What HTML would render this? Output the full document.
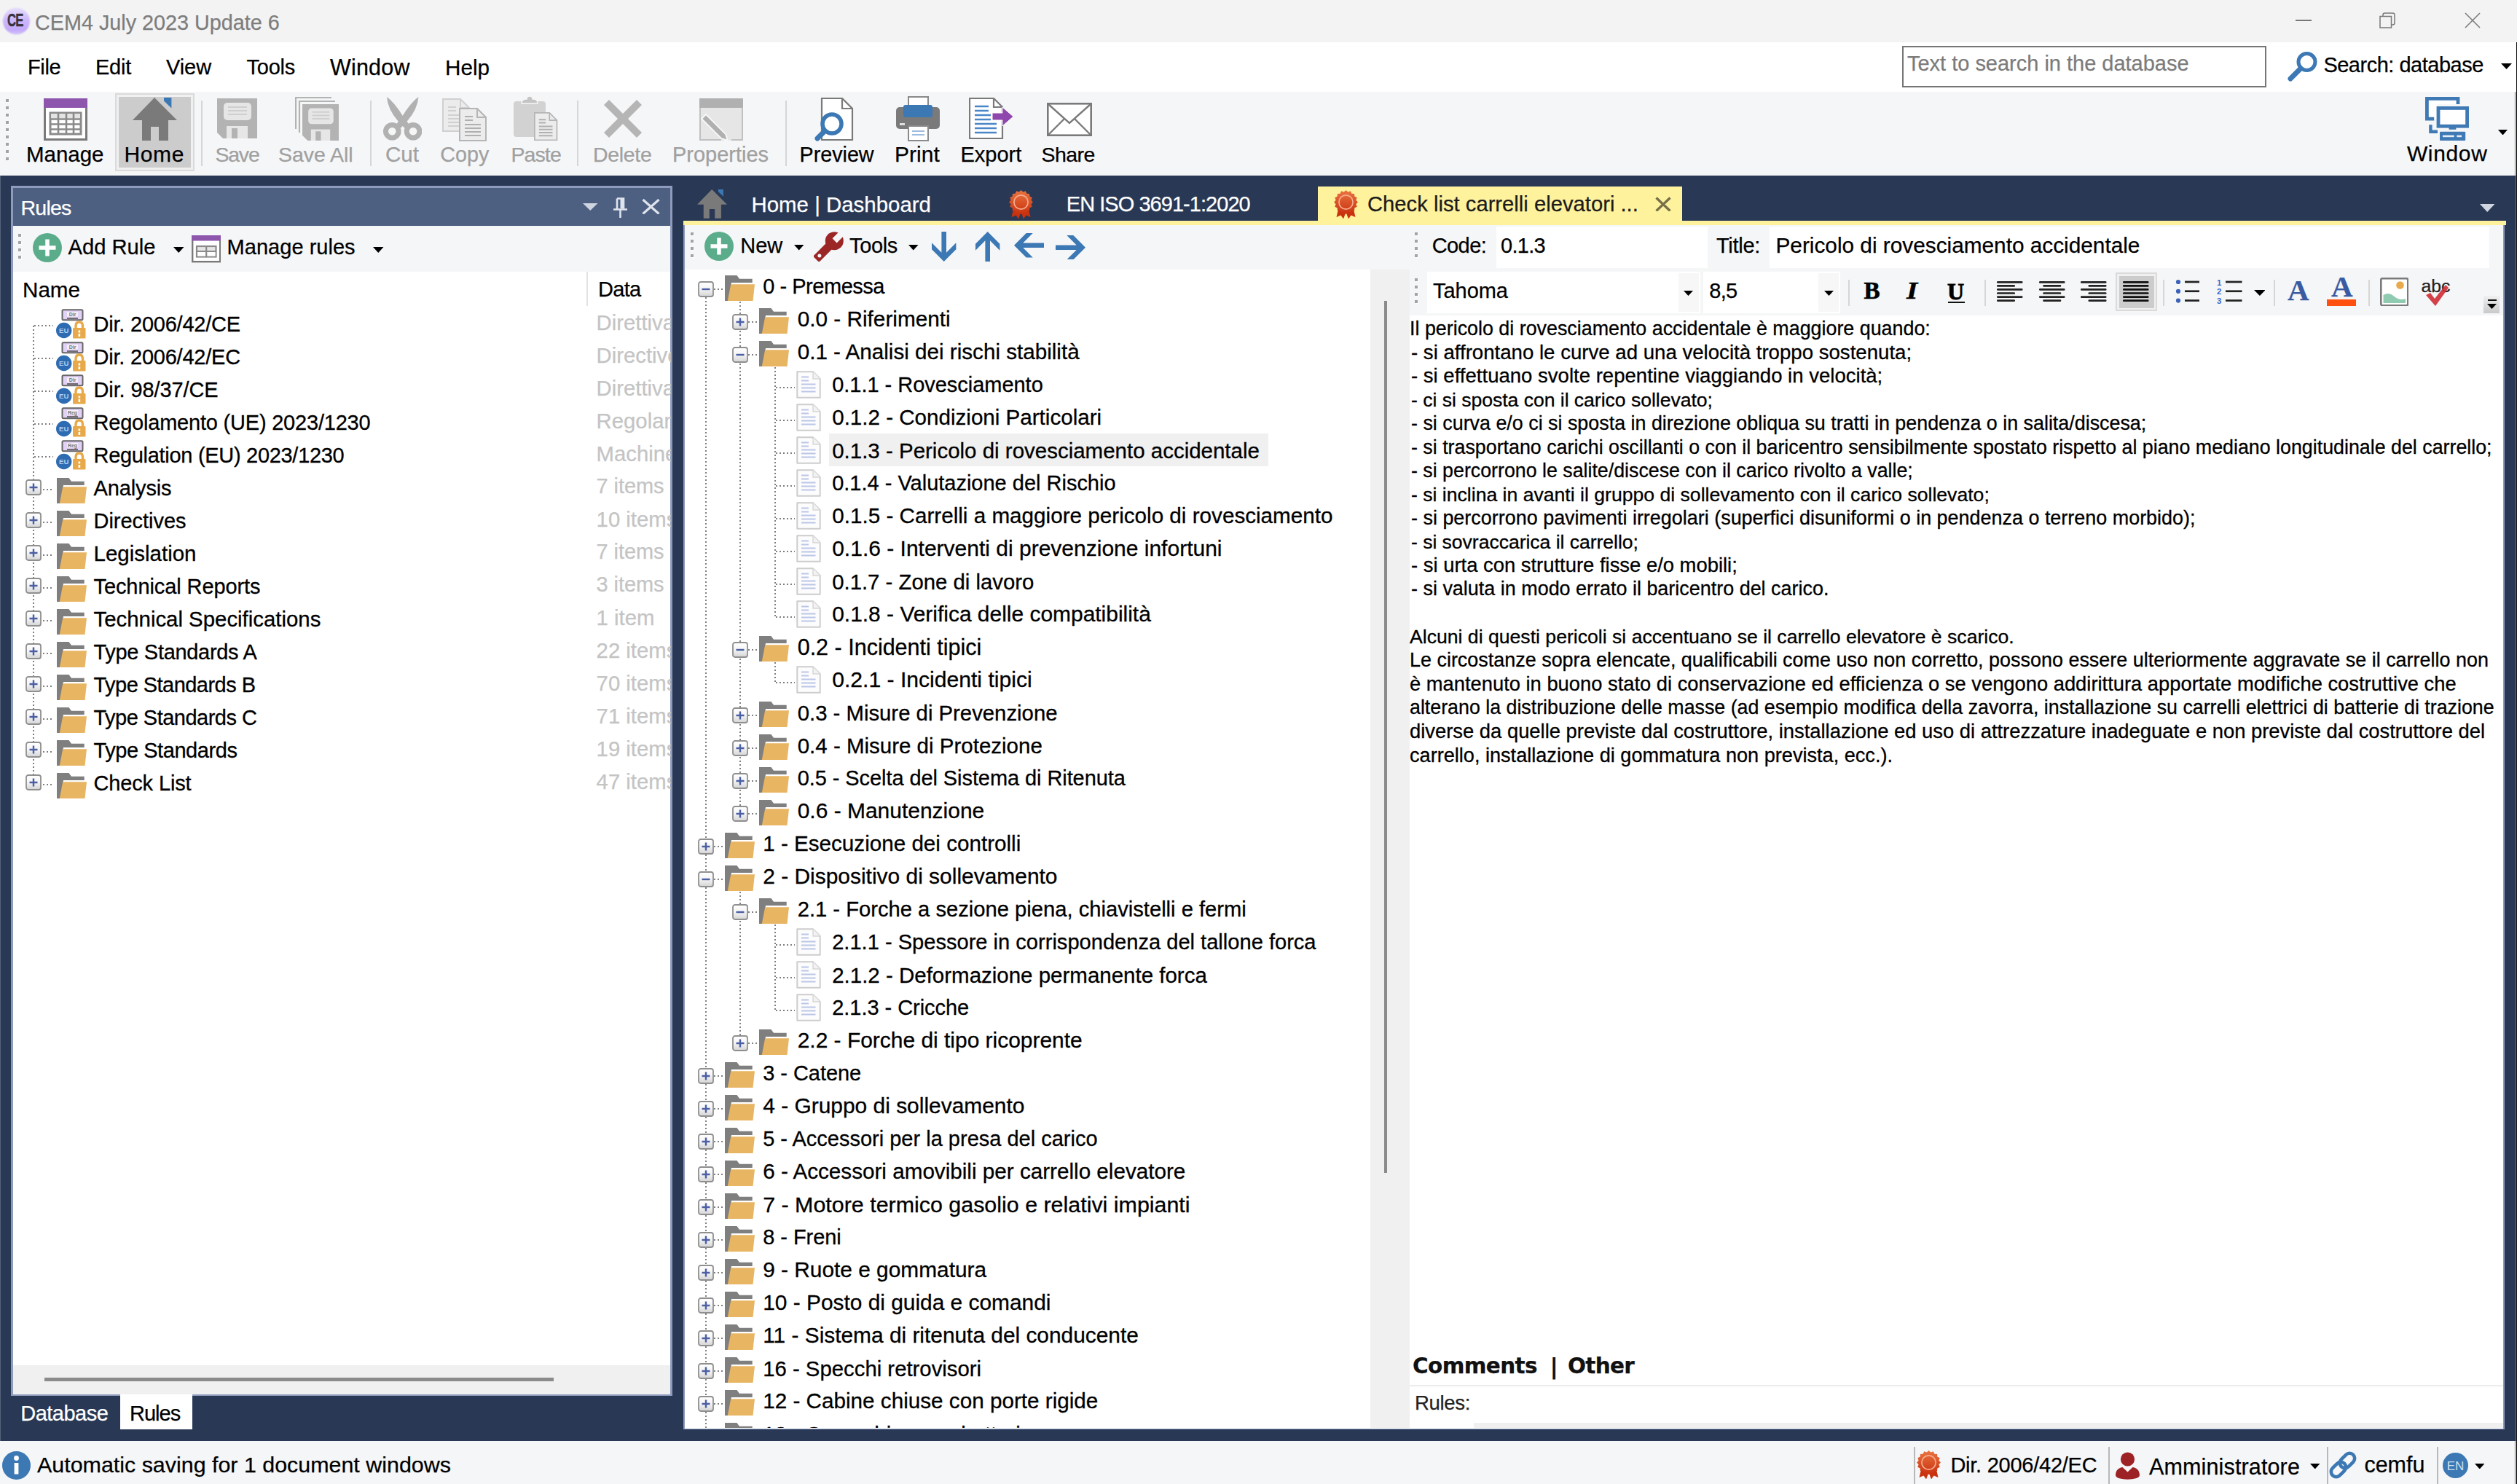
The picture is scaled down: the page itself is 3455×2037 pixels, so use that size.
<!DOCTYPE html><html><head><meta charset='utf-8'><title>CEM4</title><style>html,body{margin:0;padding:0}body{width:3455px;height:2037px;overflow:hidden;position:relative;background:#f5f6f7;font-family:'Liberation Sans',sans-serif}
div,span,svg{position:absolute}
.t{white-space:nowrap;-webkit-text-stroke:0.25px currentColor}
.vd{width:2px;background:repeating-linear-gradient(to bottom,#808080 0 2px,transparent 2px 5px)}
.hd{height:2px;background:repeating-linear-gradient(to right,#808080 0 2px,transparent 2px 5px)}
</style></head><body>
<div style="left:0px;top:0px;width:3455px;height:58px;background:#f3f3f3;"></div>
<div style="left:2.5px;top:9px;width:39.5px;height:39.5px;border-radius:50%;background:radial-gradient(circle at 50% 50%,rgba(243,243,243,0) 60%,#f3f3f3 72%),linear-gradient(#e9e2fc,#cdb8fb 45%,#c3a9fa 80%,#d9cbf8)"></div>
<span id="t1" class="t" style="left:10px;top:16.46px;font-size:24.50px;line-height:24.50px;color:#37323d;font-weight:700;-webkit-text-stroke:0.5px #37323d;transform:scaleX(0.68);transform-origin:0 0;letter-spacing:-1px;">CE</span>
<span id="t2" class="t" style="left:48px;top:16.83px;font-size:28.78px;line-height:28.78px;color:#7d7d7d;letter-spacing:0.000px">CEM4 July 2023 Update 6</span>
<div style="left:3151px;top:27px;width:22px;height:1.6px;background:#777;"></div>
<svg style="left:3266px;top:17px" width="22" height="22" viewBox="0 0 22 22"><path d="M1 5.5H16.5V21H1Z M5 5V3.5Q5 1 7.5 1H18.5Q21 1 21 3.5V14.5Q21 17 18.5 17H17" fill="none" stroke="#7a7a7a" stroke-width="1.5"/></svg>
<svg style="left:3383px;top:17px" width="22" height="22" viewBox="0 0 22 22"><path d="M1 1L21 21M21 1L1 21" stroke="#808080" stroke-width="1.7"/></svg>
<div style="left:0px;top:58px;width:3455px;height:68px;background:#fff;"></div>
<span id="t3" class="t" style="left:38px;top:78.47px;font-size:28.97px;line-height:28.97px;color:#000;letter-spacing:-0.325px">File</span>
<span id="t4" class="t" style="left:131px;top:78.47px;font-size:28.97px;line-height:28.97px;color:#000;letter-spacing:-0.234px">Edit</span>
<span id="t5" class="t" style="left:228px;top:78.47px;font-size:28.97px;line-height:28.97px;color:#000;letter-spacing:-0.071px">View</span>
<span id="t6" class="t" style="left:338.5px;top:78.47px;font-size:28.97px;line-height:28.97px;color:#000;letter-spacing:-0.229px">Tools</span>
<span id="t7" class="t" style="left:453px;top:77.18px;font-size:30.50px;line-height:30.50px;color:#000;letter-spacing:0.186px">Window</span>
<span id="t8" class="t" style="left:611px;top:77.90px;font-size:29.66px;line-height:29.66px;color:#000;letter-spacing:0.000px">Help</span>
<div style="left:2611px;top:63px;width:500px;height:57px;box-sizing:border-box;border:2.4px solid #767676;background:#fff"></div>
<span id="t9" class="t" style="left:2618px;top:72.98px;font-size:28.97px;line-height:28.97px;color:#7b7b7b;letter-spacing:0.000px">Text to search in the database</span>
<svg style="left:3140px;top:70px" width="42" height="42" viewBox="0 0 42 42"><circle cx="26.5" cy="15" r="11.5" fill="none" stroke="#3b78b4" stroke-width="5"/><path d="M18 24L4 38" stroke="#3b78b4" stroke-width="7" stroke-linecap="round"/></svg>
<span id="t10" class="t" style="left:3189.4px;top:75.47px;font-size:28.97px;line-height:28.97px;color:#000;letter-spacing:-0.477px">Search: database</span>
<svg style="left:3433px;top:87px" width="15" height="8" viewBox="0 0 15 8"><path d="M0 0H15L7.5 8Z" fill="#000"/></svg>
<div style="left:0px;top:126px;width:3455px;height:115px;background:#f5f6f7;"></div>
<div style="left:9px;top:137px;width:4px;height:4px;background:#fff;"></div>
<div style="left:8px;top:136px;width:4px;height:4px;background:#a3a3a3;"></div>
<div style="left:9px;top:147px;width:4px;height:4px;background:#fff;"></div>
<div style="left:8px;top:146px;width:4px;height:4px;background:#a3a3a3;"></div>
<div style="left:9px;top:157px;width:4px;height:4px;background:#fff;"></div>
<div style="left:8px;top:156px;width:4px;height:4px;background:#a3a3a3;"></div>
<div style="left:9px;top:167px;width:4px;height:4px;background:#fff;"></div>
<div style="left:8px;top:166px;width:4px;height:4px;background:#a3a3a3;"></div>
<div style="left:9px;top:177px;width:4px;height:4px;background:#fff;"></div>
<div style="left:8px;top:176px;width:4px;height:4px;background:#a3a3a3;"></div>
<div style="left:9px;top:187px;width:4px;height:4px;background:#fff;"></div>
<div style="left:8px;top:186px;width:4px;height:4px;background:#a3a3a3;"></div>
<div style="left:9px;top:197px;width:4px;height:4px;background:#fff;"></div>
<div style="left:8px;top:196px;width:4px;height:4px;background:#a3a3a3;"></div>
<div style="left:9px;top:207px;width:4px;height:4px;background:#fff;"></div>
<div style="left:8px;top:206px;width:4px;height:4px;background:#a3a3a3;"></div>
<div style="left:9px;top:217px;width:4px;height:4px;background:#fff;"></div>
<div style="left:8px;top:216px;width:4px;height:4px;background:#a3a3a3;"></div>
<svg style="left:60px;top:135px" width="60" height="58" viewBox="0 0 60 58"><rect x="1.5" y="1.5" width="57" height="55" fill="#fff" stroke="#7a7a7a" stroke-width="3"/>
<rect x="0" y="0" width="60" height="13" fill="#8e55ad"/>
<rect x="9" y="20" width="42" height="29" fill="#fff" stroke="#8a8a8a" stroke-width="3"/>
<rect x="10" y="21" width="40" height="6" fill="#e3e3e3"/>
<path d="M9 28.5H51M9 35.5H51M9 42.5H51M20 20V49M31 20V49M41 20V49" stroke="#8a8a8a" stroke-width="2.6"/></svg>
<span id="t11" class="t" style="left:36px;top:197.36px;font-size:29.47px;line-height:29.47px;color:#000;letter-spacing:0.000px">Manage</span>
<div style="left:158px;top:128px;width:109px;height:107px;box-sizing:border-box;border:2px solid #dadada;background:#f0f0f0"></div>
<div style="left:163px;top:133px;width:99px;height:97px;background:#cccccc;"></div>
<svg style="left:182px;top:133.5px" width="61" height="59" viewBox="0 0 61 59"><path d="M30 0L61 31H49V59H36V40H25V59H13V31H0Z" fill="#7a7a7a"/><path d="M43 0H53.4V14.5L43 4.5Z" fill="#3b78b4"/></svg>
<span id="t12" class="t" style="left:170.5px;top:196.91px;font-size:30.00px;line-height:30.00px;color:#000;letter-spacing:0.617px">Home</span>
<div style="left:275.5px;top:138px;width:2px;height:90px;background:#d6d6d6;"></div>
<svg style="left:297.5px;top:135px" width="55" height="55" viewBox="0 0 55 55"><path d="M0 0H55V55H8L0 47Z" fill="#b3b3b3"/><rect x="9" y="6" width="38" height="24" rx="5" fill="#e6e6e6"/>
<path d="M15 12H41M15 17H41M15 22H41" stroke="#cfcfcf" stroke-width="2"/><rect x="13" y="38" width="29" height="17" fill="#e6e6e6"/><rect x="20" y="41" width="8" height="14" fill="#b3b3b3"/></svg>
<span id="t13" class="t" style="left:295.5px;top:198.17px;font-size:28.50px;line-height:28.50px;color:#a0a0a0;letter-spacing:-1.243px">Save</span>
<svg style="left:405px;top:133px" width="60" height="60" viewBox="0 0 60 60"><path d="M1 44V1H50M6 49V6H55" fill="none" stroke="#b3b3b3" stroke-width="2.2"/><g transform="translate(10,10) scale(0.91)"><path d="M0 0H55V55H8L0 47Z" fill="#b3b3b3"/><rect x="9" y="6" width="38" height="24" rx="5" fill="#e6e6e6"/>
<path d="M15 12H41M15 17H41M15 22H41" stroke="#cfcfcf" stroke-width="2"/><rect x="13" y="38" width="29" height="17" fill="#e6e6e6"/><rect x="20" y="41" width="8" height="14" fill="#b3b3b3"/></g></svg>
<span id="t14" class="t" style="left:382px;top:198.17px;font-size:28.50px;line-height:28.50px;color:#a0a0a0;letter-spacing:-0.061px">Save All</span>
<div style="left:507.7px;top:138px;width:2px;height:90px;background:#d6d6d6;"></div>
<svg style="left:525.6px;top:132.8px" width="53.4" height="60" viewBox="0 0 53.4 60"><g fill="#b1b1b1"><path d="M5 0Q15 7 27.5 27L35 37L29.5 43L21 34Q6 17 5 0Z"/><path d="M48.4 0Q38.4 7 25.9 27L18.4 37L23.9 43L32.4 34Q47.4 17 48.4 0Z"/></g>
<circle cx="12.3" cy="47.3" r="8.8" fill="none" stroke="#b1b1b1" stroke-width="7"/><circle cx="41.1" cy="47.3" r="8.8" fill="none" stroke="#b1b1b1" stroke-width="7"/></svg>
<span id="t15" class="t" style="left:529px;top:197.28px;font-size:29.56px;line-height:29.56px;color:#a0a0a0;letter-spacing:0.000px">Cut</span>
<svg style="left:607px;top:134px" width="62" height="60" viewBox="0 0 62 60"><g transform="translate(0,1)"><path d="M1 1H25L37 13V45H1Z" fill="#ececec" stroke="#d0d0d0" stroke-width="2"/><path d="M25 1V13H37" fill="none" stroke="#d0d0d0" stroke-width="2"/><path d="M8 12H19M8 17H19M8 23H30M8 28H30M8 33H30M8 38H30" stroke="#d0d0d0" stroke-width="2.2"/></g><g transform="translate(23,14)"><path d="M1 1H25L37 13V45H1Z" fill="#ececec" stroke="#b5b5b5" stroke-width="2"/><path d="M25 1V13H37" fill="none" stroke="#b5b5b5" stroke-width="2"/><path d="M8 12H19M8 17H19M8 23H30M8 28H30M8 33H30M8 38H30" stroke="#b0b0b0" stroke-width="2.2"/></g></svg>
<span id="t16" class="t" style="left:604.3px;top:198.01px;font-size:28.70px;line-height:28.70px;color:#a0a0a0;letter-spacing:0.000px">Copy</span>
<svg style="left:704px;top:132px" width="62" height="62" viewBox="0 0 62 62"><rect x="1" y="7" width="44" height="49" rx="4" fill="#d2d2d2"/><path d="M12 10Q12 4 18 4H19Q19 0 23 0Q27 0 27 4H28Q34 4 34 10Z" fill="#c4c4c4" stroke="#f5f6f7" stroke-width="1.5"/>
<g transform="translate(29,22) scale(0.85)"><path d="M1 1H25L37 13V45H1Z" fill="#ececec" stroke="#b5b5b5" stroke-width="2"/><path d="M25 1V13H37" fill="none" stroke="#b5b5b5" stroke-width="2"/><path d="M8 12H19M8 17H19M8 23H30M8 28H30M8 33H30M8 38H30" stroke="#b0b0b0" stroke-width="2.2"/></g></svg>
<span id="t17" class="t" style="left:701.4px;top:198.17px;font-size:28.50px;line-height:28.50px;color:#a0a0a0;letter-spacing:-0.877px">Paste</span>
<div style="left:792.4px;top:138px;width:2px;height:90px;background:#d6d6d6;"></div>
<svg style="left:829px;top:137px" width="52" height="52" viewBox="0 0 52 52"><path d="M7 0L26 19L45 0L52 7L33 26L52 45L45 52L26 33L7 52L0 45L19 26L0 7Z" fill="#b5b5b5"/></svg>
<span id="t18" class="t" style="left:814px;top:198.17px;font-size:28.50px;line-height:28.50px;color:#a0a0a0;letter-spacing:-0.314px">Delete</span>
<svg style="left:960px;top:135px" width="60" height="58" viewBox="0 0 60 58"><rect x="0" y="0" width="60" height="58" fill="#e6e6e6"/><rect x="0" y="0" width="60" height="13" fill="#b0b0b0"/><path d="M1 13V57H30M44 57H59V13" fill="none" stroke="#c0c0c0" stroke-width="2"/>
<path d="M3 28L9 22L36 49L39 58L30 55Z" fill="#b0b0b0" stroke="#f5f6f7" stroke-width="2"/></svg>
<span id="t19" class="t" style="left:923px;top:197.78px;font-size:28.96px;line-height:28.96px;color:#a0a0a0;letter-spacing:0.000px">Properties</span>
<div style="left:1077.7px;top:138px;width:2px;height:90px;background:#d6d6d6;"></div>
<svg style="left:1118px;top:134px" width="56" height="60" viewBox="0 0 56 60"><path d="M10 1H38L52 15V58H10Z" fill="#fff" stroke="#7a7a7a" stroke-width="2.2"/><path d="M38 1V15H52" fill="none" stroke="#7a7a7a" stroke-width="2.2"/>
<circle cx="24" cy="36" r="13" fill="#fff" stroke="#3b78b4" stroke-width="5.5"/><path d="M14 46L4 56" stroke="#3b78b4" stroke-width="7" stroke-linecap="round"/></svg>
<span id="t20" class="t" style="left:1097.6px;top:198.02px;font-size:28.68px;line-height:28.68px;color:#000;letter-spacing:0.000px">Preview</span>
<svg style="left:1230px;top:132px" width="60" height="62" viewBox="0 0 60 62"><rect x="17" y="1" width="27" height="16" fill="#fff" stroke="#8a8a8a" stroke-width="2"/>
<rect x="0" y="15" width="60" height="30" rx="5" fill="#7a7a7a"/><rect x="10" y="12" width="40" height="17" rx="3" fill="#3b78b4"/><rect x="5" y="37" width="7" height="3" fill="#e0e0e0"/>
<rect x="17" y="41" width="27" height="20" fill="#fff" stroke="#8a8a8a" stroke-width="2"/><path d="M22 48H39M22 53H39" stroke="#9dbce0" stroke-width="2"/></svg>
<span id="t21" class="t" style="left:1228px;top:196.91px;font-size:30.00px;line-height:30.00px;color:#000;letter-spacing:0.062px">Print</span>
<svg style="left:1330px;top:134px" width="62" height="58" viewBox="0 0 62 58"><path d="M1 1H34L46 13V56H1Z" fill="#fff" stroke="#7a7a7a" stroke-width="2.2"/><path d="M34 1V13H46" fill="none" stroke="#7a7a7a" stroke-width="2.2"/>
<path d="M8 12H27M8 18H27M8 24H30M8 30H30M8 36H38M8 42H38M8 48H38" stroke="#4a86c8" stroke-width="2.4"/>
<path d="M32 21H46V13L61 26L46 39V31H32Z" fill="#8e48ad" stroke="#fff" stroke-width="1"/></svg>
<span id="t22" class="t" style="left:1318.4px;top:197.70px;font-size:29.06px;line-height:29.06px;color:#000;letter-spacing:0.000px">Export</span>
<svg style="left:1437px;top:141px" width="62" height="46" viewBox="0 0 62 46"><rect x="1.3" y="1.3" width="59.4" height="43.4" fill="#fff" stroke="#7a7a7a" stroke-width="2.6"/><path d="M2 2L31 28L60 2M2 44L24 22M60 44L38 22" fill="none" stroke="#7a7a7a" stroke-width="2.4"/></svg>
<span id="t23" class="t" style="left:1429.4px;top:198.17px;font-size:28.50px;line-height:28.50px;color:#000;letter-spacing:-0.492px">Share</span>
<svg style="left:3329px;top:132.8px" width="60" height="60" viewBox="0 0 60 60"><path d="M2.4 2.4H45V10H2.4Z" fill="#fff"/><rect x="2.4" y="2.4" width="14" height="28" fill="#fff"/>
<path d="M45 10V2.4H2.4V30.2H12.2" fill="none" stroke="#3f7ab5" stroke-width="4.8"/>
<rect x="18" y="15.4" width="39.6" height="24.8" fill="#fff" stroke="#3f7ab5" stroke-width="4.8"/><rect x="32.6" y="42" width="9.8" height="2.8" fill="#3f7ab5"/>
<path d="M7.4 38.2V47.8H17" fill="none" stroke="#3f7ab5" stroke-width="4.4"/>
<rect x="20" y="47.8" width="35.2" height="12.2" rx="1" fill="#3f7ab5"/><rect x="24" y="52.6" width="15.7" height="2.6" fill="#e8eef6"/><rect x="43.4" y="52.6" width="6.6" height="2.6" fill="#e8eef6"/></svg>
<span id="t24" class="t" style="left:3303.9px;top:196.30px;font-size:30.00px;line-height:30.00px;color:#000;letter-spacing:0.649px">Window</span>
<svg style="left:3429px;top:177.5px" width="13" height="7.5" viewBox="0 0 13 7.5"><path d="M0 0H13L6.5 7.5Z" fill="#000"/></svg>
<div style="left:0px;top:240.5px;width:3455px;height:1737.5px;background:#293955;"></div>
<div style="left:14.8px;top:255px;width:908px;height:1660.5px;background:#8e9bbc;"></div>
<div style="left:17.6px;top:258.2px;width:902.7px;height:51.8px;background:#4d6082;"></div>
<span id="t25" class="t" style="left:28.5px;top:271.07px;font-size:28.50px;line-height:28.50px;color:#fff;letter-spacing:-0.774px">Rules</span>
<svg style="left:800px;top:278.5px" width="20.5" height="10" viewBox="0 0 20.5 10"><path d="M0 0H20.5L10.25 10Z" fill="#ced4e0"/></svg>
<svg style="left:842px;top:271px" width="19" height="28" viewBox="0 0 19 28"><path d="M5 1.5H14V15.5" fill="none" stroke="#dfe3ec" stroke-width="2.6"/><rect x="9.5" y="1.5" width="4.5" height="14" fill="#dfe3ec"/><path d="M5 1.5V15.5M0 16.5H19M9.5 17V28" stroke="#dfe3ec" stroke-width="2.6" fill="none"/></svg>
<svg style="left:880.5px;top:272.5px" width="25" height="21.5" viewBox="0 0 25 21.5"><path d="M1.5 1L23.5 20.5M23.5 1L1.5 20.5" stroke="#dfe3ec" stroke-width="3.2"/></svg>
<div style="left:17.6px;top:310px;width:902.7px;height:63px;background:#f5f6f7;"></div>
<div style="left:26px;top:322px;width:4px;height:4px;background:#fff;"></div>
<div style="left:25px;top:321px;width:4px;height:4px;background:#a3a3a3;"></div>
<div style="left:26px;top:332px;width:4px;height:4px;background:#fff;"></div>
<div style="left:25px;top:331px;width:4px;height:4px;background:#a3a3a3;"></div>
<div style="left:26px;top:342px;width:4px;height:4px;background:#fff;"></div>
<div style="left:25px;top:341px;width:4px;height:4px;background:#a3a3a3;"></div>
<div style="left:26px;top:352px;width:4px;height:4px;background:#fff;"></div>
<div style="left:25px;top:351px;width:4px;height:4px;background:#a3a3a3;"></div>
<svg style="left:44.5px;top:320px" width="40" height="40" viewBox="0 0 40 40"><circle cx="20" cy="20" r="20" fill="#5bac8b"/><path d="M20 8.5V31.5M8.5 20H31.5" stroke="#fff" stroke-width="5.5"/></svg>
<span id="t26" class="t" style="left:93.5px;top:325.31px;font-size:29.17px;line-height:29.17px;color:#000;letter-spacing:0.000px">Add Rule</span>
<svg style="left:238px;top:338.5px" width="14.5" height="8" viewBox="0 0 14.5 8"><path d="M0 0H14.5L7.25 8Z" fill="#000"/></svg>
<svg style="left:262.5px;top:323px" width="40.5" height="37.5" viewBox="0 0 40.5 37.5"><rect x="1.2" y="1.2" width="38" height="35" fill="#fff" stroke="#7a7a7a" stroke-width="2.4"/><rect x="0" y="0" width="40.5" height="7.5" fill="#8e55ad"/>
<rect x="7" y="15" width="26.5" height="14.5" fill="#e6e6e6" stroke="#8a8a8a" stroke-width="2.2"/><rect x="8" y="23" width="24.5" height="5.5" fill="#fff"/><path d="M7 22H33.5M20.2 15V29.5" stroke="#8a8a8a" stroke-width="2.2"/></svg>
<span id="t27" class="t" style="left:311.6px;top:325.41px;font-size:29.05px;line-height:29.05px;color:#000;letter-spacing:0.000px">Manage rules</span>
<svg style="left:512px;top:338.5px" width="14.5" height="8" viewBox="0 0 14.5 8"><path d="M0 0H14.5L7.25 8Z" fill="#000"/></svg>
<div style="left:17.6px;top:373px;width:902.7px;height:1501px;background:#fff;"></div>
<div style="left:805px;top:373px;width:2px;height:47px;background:#e2e2e2;"></div>
<span id="t28" class="t" style="left:31px;top:382.93px;font-size:29.62px;line-height:29.62px;color:#000;letter-spacing:0.000px">Name</span>
<span id="t29" class="t" style="left:821px;top:383.47px;font-size:28.97px;line-height:28.97px;color:#000;letter-spacing:-0.679px">Data</span>
<div style="left:17.6px;top:1874px;width:902.7px;height:39.5px;background:#f0f0f0;"></div>
<div style="left:60.5px;top:1890.5px;width:699px;height:5px;background:#8b8b8b;"></div>
<div class="vd" style="left:45px;top:447px;height:630px"></div>
<div style="left:807px;top:420px;width:113.5px;height:700px;overflow:hidden">
<span id="t30" class="t" style="left:11.6px;top:8.10px;font-size:29.30px;line-height:29.30px;color:#c4c4c4;">Direttiva</span>
<span id="t31" class="t" style="left:11.6px;top:53.10px;font-size:29.30px;line-height:29.30px;color:#c4c4c4;">Directive</span>
<span id="t32" class="t" style="left:11.6px;top:98.10px;font-size:29.30px;line-height:29.30px;color:#c4c4c4;">Direttiva</span>
<span id="t33" class="t" style="left:11.6px;top:143.10px;font-size:29.30px;line-height:29.30px;color:#c4c4c4;">Regolamento</span>
<span id="t34" class="t" style="left:11.6px;top:188.10px;font-size:29.30px;line-height:29.30px;color:#c4c4c4;">Machinery</span>
<span id="t35" class="t" style="left:11.6px;top:233.37px;font-size:28.97px;line-height:28.97px;color:#c4c4c4;letter-spacing:-0.085px">7 items</span>
<span id="t36" class="t" style="left:11.6px;top:278.10px;font-size:29.30px;line-height:29.30px;color:#c4c4c4;">10 items</span>
<span id="t37" class="t" style="left:11.6px;top:323.37px;font-size:28.97px;line-height:28.97px;color:#c4c4c4;letter-spacing:-0.085px">7 items</span>
<span id="t38" class="t" style="left:11.6px;top:368.37px;font-size:28.97px;line-height:28.97px;color:#c4c4c4;letter-spacing:-0.085px">3 items</span>
<span id="t39" class="t" style="left:11.6px;top:413.03px;font-size:29.38px;line-height:29.38px;color:#c4c4c4;letter-spacing:0.000px">1 item</span>
<span id="t40" class="t" style="left:11.6px;top:458.10px;font-size:29.30px;line-height:29.30px;color:#c4c4c4;">22 items</span>
<span id="t41" class="t" style="left:11.6px;top:503.10px;font-size:29.30px;line-height:29.30px;color:#c4c4c4;">70 items</span>
<span id="t42" class="t" style="left:11.6px;top:548.10px;font-size:29.30px;line-height:29.30px;color:#c4c4c4;">71 items</span>
<span id="t43" class="t" style="left:11.6px;top:593.10px;font-size:29.30px;line-height:29.30px;color:#c4c4c4;">19 items</span>
<span id="t44" class="t" style="left:11.6px;top:638.10px;font-size:29.30px;line-height:29.30px;color:#c4c4c4;">47 items</span>
</div>
<div class="hd" style="left:47px;top:446px;width:26px"></div>
<svg style="left:77.3px;top:424.2px" width="41" height="41" viewBox="0 0 41 41"><rect x="8.5" y="1.3" width="28" height="14" rx="1.5" fill="#e2d2f6" stroke="#666" stroke-width="2"/><rect x="15" y="4" width="15" height="6.5" fill="#f4f0f8"/>
<text x="22.5" y="9.6" font-size="7" font-family="Liberation Sans,sans-serif" text-anchor="middle" fill="#777" font-weight="700">Dir</text><path d="M15 13H30" stroke="#555" stroke-width="1.6"/>
<circle cx="10.7" cy="29.5" r="10.7" fill="#2d6cb2"/><text x="10.7" y="33" font-size="9.5" font-family="Liberation Sans,sans-serif" text-anchor="middle" fill="#b5cdea" font-weight="700">EU</text>
<path d="M27 27V23.5Q27 18 31.7 18Q36.5 18 36.5 23.5V27" fill="none" stroke="#e8a94a" stroke-width="3.4"/><rect x="23" y="26" width="17.5" height="14.5" rx="1" fill="#e8a94a"/><rect x="30.6" y="29.5" width="2.6" height="3" fill="#fff"/><rect x="30.6" y="34" width="2.6" height="4" fill="#fff"/></svg>
<span id="t45" class="t" style="left:128.5px;top:430.67px;font-size:28.97px;line-height:28.97px;color:#000;-webkit-text-stroke:0.3px #000;letter-spacing:-0.204px">Dir. 2006/42/CE</span>
<div class="hd" style="left:47px;top:491px;width:26px"></div>
<svg style="left:77.3px;top:469.2px" width="41" height="41" viewBox="0 0 41 41"><rect x="8.5" y="1.3" width="28" height="14" rx="1.5" fill="#e2d2f6" stroke="#666" stroke-width="2"/><rect x="15" y="4" width="15" height="6.5" fill="#f4f0f8"/>
<text x="22.5" y="9.6" font-size="7" font-family="Liberation Sans,sans-serif" text-anchor="middle" fill="#777" font-weight="700">Dir</text><path d="M15 13H30" stroke="#555" stroke-width="1.6"/>
<circle cx="10.7" cy="29.5" r="10.7" fill="#2d6cb2"/><text x="10.7" y="33" font-size="9.5" font-family="Liberation Sans,sans-serif" text-anchor="middle" fill="#b5cdea" font-weight="700">EU</text>
<path d="M27 27V23.5Q27 18 31.7 18Q36.5 18 36.5 23.5V27" fill="none" stroke="#e8a94a" stroke-width="3.4"/><rect x="23" y="26" width="17.5" height="14.5" rx="1" fill="#e8a94a"/><rect x="30.6" y="29.5" width="2.6" height="3" fill="#fff"/><rect x="30.6" y="34" width="2.6" height="4" fill="#fff"/></svg>
<span id="t46" class="t" style="left:128.5px;top:475.67px;font-size:28.97px;line-height:28.97px;color:#000;-webkit-text-stroke:0.3px #000;letter-spacing:-0.204px">Dir. 2006/42/EC</span>
<div class="hd" style="left:47px;top:536px;width:26px"></div>
<svg style="left:77.3px;top:514.2px" width="41" height="41" viewBox="0 0 41 41"><rect x="8.5" y="1.3" width="28" height="14" rx="1.5" fill="#e2d2f6" stroke="#666" stroke-width="2"/><rect x="15" y="4" width="15" height="6.5" fill="#f4f0f8"/>
<text x="22.5" y="9.6" font-size="7" font-family="Liberation Sans,sans-serif" text-anchor="middle" fill="#777" font-weight="700">Dir</text><path d="M15 13H30" stroke="#555" stroke-width="1.6"/>
<circle cx="10.7" cy="29.5" r="10.7" fill="#2d6cb2"/><text x="10.7" y="33" font-size="9.5" font-family="Liberation Sans,sans-serif" text-anchor="middle" fill="#b5cdea" font-weight="700">EU</text>
<path d="M27 27V23.5Q27 18 31.7 18Q36.5 18 36.5 23.5V27" fill="none" stroke="#e8a94a" stroke-width="3.4"/><rect x="23" y="26" width="17.5" height="14.5" rx="1" fill="#e8a94a"/><rect x="30.6" y="29.5" width="2.6" height="3" fill="#fff"/><rect x="30.6" y="34" width="2.6" height="4" fill="#fff"/></svg>
<span id="t47" class="t" style="left:128.5px;top:520.67px;font-size:28.97px;line-height:28.97px;color:#000;-webkit-text-stroke:0.3px #000;letter-spacing:-0.103px">Dir. 98/37/CE</span>
<div class="hd" style="left:47px;top:581px;width:26px"></div>
<svg style="left:77.3px;top:559.2px" width="41" height="41" viewBox="0 0 41 41"><rect x="8.5" y="1.3" width="28" height="14" rx="1.5" fill="#e2d2f6" stroke="#666" stroke-width="2"/><rect x="15" y="4" width="15" height="6.5" fill="#f4f0f8"/>
<text x="22.5" y="9.6" font-size="7" font-family="Liberation Sans,sans-serif" text-anchor="middle" fill="#777" font-weight="700">Reg</text><path d="M15 13H30" stroke="#555" stroke-width="1.6"/>
<circle cx="10.7" cy="29.5" r="10.7" fill="#2d6cb2"/><text x="10.7" y="33" font-size="9.5" font-family="Liberation Sans,sans-serif" text-anchor="middle" fill="#b5cdea" font-weight="700">EU</text>
<path d="M27 27V23.5Q27 18 31.7 18Q36.5 18 36.5 23.5V27" fill="none" stroke="#e8a94a" stroke-width="3.4"/><rect x="23" y="26" width="17.5" height="14.5" rx="1" fill="#e8a94a"/><rect x="30.6" y="29.5" width="2.6" height="3" fill="#fff"/><rect x="30.6" y="34" width="2.6" height="4" fill="#fff"/></svg>
<span id="t48" class="t" style="left:128.5px;top:565.67px;font-size:28.97px;line-height:28.97px;color:#000;-webkit-text-stroke:0.3px #000;letter-spacing:-0.191px">Regolamento (UE) 2023/1230</span>
<div class="hd" style="left:47px;top:626px;width:26px"></div>
<svg style="left:77.3px;top:604.2px" width="41" height="41" viewBox="0 0 41 41"><rect x="8.5" y="1.3" width="28" height="14" rx="1.5" fill="#e2d2f6" stroke="#666" stroke-width="2"/><rect x="15" y="4" width="15" height="6.5" fill="#f4f0f8"/>
<text x="22.5" y="9.6" font-size="7" font-family="Liberation Sans,sans-serif" text-anchor="middle" fill="#777" font-weight="700">Reg</text><path d="M15 13H30" stroke="#555" stroke-width="1.6"/>
<circle cx="10.7" cy="29.5" r="10.7" fill="#2d6cb2"/><text x="10.7" y="33" font-size="9.5" font-family="Liberation Sans,sans-serif" text-anchor="middle" fill="#b5cdea" font-weight="700">EU</text>
<path d="M27 27V23.5Q27 18 31.7 18Q36.5 18 36.5 23.5V27" fill="none" stroke="#e8a94a" stroke-width="3.4"/><rect x="23" y="26" width="17.5" height="14.5" rx="1" fill="#e8a94a"/><rect x="30.6" y="29.5" width="2.6" height="3" fill="#fff"/><rect x="30.6" y="34" width="2.6" height="4" fill="#fff"/></svg>
<span id="t49" class="t" style="left:128.5px;top:610.67px;font-size:28.97px;line-height:28.97px;color:#000;-webkit-text-stroke:0.3px #000;letter-spacing:-0.286px">Regulation (EU) 2023/1230</span>
<div class="hd" style="left:59px;top:671px;width:15px"></div>
<svg style="left:35px;top:658.1px" width="22" height="22" viewBox="0 0 22 22"><defs><linearGradient id="eg" x1="0" y1="0" x2="0" y2="1"><stop offset="0" stop-color="#fff"/><stop offset="0.5" stop-color="#f4f4f4"/><stop offset="1" stop-color="#d4d4d4"/></linearGradient></defs><rect x="1" y="1" width="20" height="20" rx="3" fill="url(#eg)" stroke="#8f8f8f" stroke-width="1.8"/><path d="M5.5 11H16.5M11 5.5V16.5" stroke="#4a5fa5" stroke-width="2.4"/></svg>
<svg style="left:77.5px;top:655.5px" width="41" height="35" viewBox="0 0 41 35"><path d="M0 0H16.5L20 4.7H37.7V10H9L5 35H0Z" fill="#7f7f7f"/><path d="M8.2 12.2H41L38.5 35H3.8Z" fill="#e8b563"/></svg>
<span id="t50" class="t" style="left:128.5px;top:655.67px;font-size:28.97px;line-height:28.97px;color:#000;-webkit-text-stroke:0.3px #000;letter-spacing:-0.112px">Analysis</span>
<div class="hd" style="left:59px;top:716px;width:15px"></div>
<svg style="left:35px;top:703.1px" width="22" height="22" viewBox="0 0 22 22"><defs><linearGradient id="eg" x1="0" y1="0" x2="0" y2="1"><stop offset="0" stop-color="#fff"/><stop offset="0.5" stop-color="#f4f4f4"/><stop offset="1" stop-color="#d4d4d4"/></linearGradient></defs><rect x="1" y="1" width="20" height="20" rx="3" fill="url(#eg)" stroke="#8f8f8f" stroke-width="1.8"/><path d="M5.5 11H16.5M11 5.5V16.5" stroke="#4a5fa5" stroke-width="2.4"/></svg>
<svg style="left:77.5px;top:700.5px" width="41" height="35" viewBox="0 0 41 35"><path d="M0 0H16.5L20 4.7H37.7V10H9L5 35H0Z" fill="#7f7f7f"/><path d="M8.2 12.2H41L38.5 35H3.8Z" fill="#e8b563"/></svg>
<span id="t51" class="t" style="left:128.5px;top:700.67px;font-size:28.97px;line-height:28.97px;color:#000;-webkit-text-stroke:0.3px #000;letter-spacing:-0.020px">Directives</span>
<div class="hd" style="left:59px;top:761px;width:15px"></div>
<svg style="left:35px;top:748.1px" width="22" height="22" viewBox="0 0 22 22"><defs><linearGradient id="eg" x1="0" y1="0" x2="0" y2="1"><stop offset="0" stop-color="#fff"/><stop offset="0.5" stop-color="#f4f4f4"/><stop offset="1" stop-color="#d4d4d4"/></linearGradient></defs><rect x="1" y="1" width="20" height="20" rx="3" fill="url(#eg)" stroke="#8f8f8f" stroke-width="1.8"/><path d="M5.5 11H16.5M11 5.5V16.5" stroke="#4a5fa5" stroke-width="2.4"/></svg>
<svg style="left:77.5px;top:745.5px" width="41" height="35" viewBox="0 0 41 35"><path d="M0 0H16.5L20 4.7H37.7V10H9L5 35H0Z" fill="#7f7f7f"/><path d="M8.2 12.2H41L38.5 35H3.8Z" fill="#e8b563"/></svg>
<span id="t52" class="t" style="left:128.5px;top:745.24px;font-size:29.49px;line-height:29.49px;color:#000;-webkit-text-stroke:0.3px #000;letter-spacing:0.000px">Legislation</span>
<div class="hd" style="left:59px;top:806px;width:15px"></div>
<svg style="left:35px;top:793.1px" width="22" height="22" viewBox="0 0 22 22"><defs><linearGradient id="eg" x1="0" y1="0" x2="0" y2="1"><stop offset="0" stop-color="#fff"/><stop offset="0.5" stop-color="#f4f4f4"/><stop offset="1" stop-color="#d4d4d4"/></linearGradient></defs><rect x="1" y="1" width="20" height="20" rx="3" fill="url(#eg)" stroke="#8f8f8f" stroke-width="1.8"/><path d="M5.5 11H16.5M11 5.5V16.5" stroke="#4a5fa5" stroke-width="2.4"/></svg>
<svg style="left:77.5px;top:790.5px" width="41" height="35" viewBox="0 0 41 35"><path d="M0 0H16.5L20 4.7H37.7V10H9L5 35H0Z" fill="#7f7f7f"/><path d="M8.2 12.2H41L38.5 35H3.8Z" fill="#e8b563"/></svg>
<span id="t53" class="t" style="left:128.5px;top:790.67px;font-size:28.97px;line-height:28.97px;color:#000;-webkit-text-stroke:0.3px #000;letter-spacing:-0.077px">Technical Reports</span>
<div class="hd" style="left:59px;top:851px;width:15px"></div>
<svg style="left:35px;top:838.1px" width="22" height="22" viewBox="0 0 22 22"><defs><linearGradient id="eg" x1="0" y1="0" x2="0" y2="1"><stop offset="0" stop-color="#fff"/><stop offset="0.5" stop-color="#f4f4f4"/><stop offset="1" stop-color="#d4d4d4"/></linearGradient></defs><rect x="1" y="1" width="20" height="20" rx="3" fill="url(#eg)" stroke="#8f8f8f" stroke-width="1.8"/><path d="M5.5 11H16.5M11 5.5V16.5" stroke="#4a5fa5" stroke-width="2.4"/></svg>
<svg style="left:77.5px;top:835.5px" width="41" height="35" viewBox="0 0 41 35"><path d="M0 0H16.5L20 4.7H37.7V10H9L5 35H0Z" fill="#7f7f7f"/><path d="M8.2 12.2H41L38.5 35H3.8Z" fill="#e8b563"/></svg>
<span id="t54" class="t" style="left:128.5px;top:835.32px;font-size:29.39px;line-height:29.39px;color:#000;-webkit-text-stroke:0.3px #000;letter-spacing:0.000px">Technical Specifications</span>
<div class="hd" style="left:59px;top:896px;width:15px"></div>
<svg style="left:35px;top:883.1px" width="22" height="22" viewBox="0 0 22 22"><defs><linearGradient id="eg" x1="0" y1="0" x2="0" y2="1"><stop offset="0" stop-color="#fff"/><stop offset="0.5" stop-color="#f4f4f4"/><stop offset="1" stop-color="#d4d4d4"/></linearGradient></defs><rect x="1" y="1" width="20" height="20" rx="3" fill="url(#eg)" stroke="#8f8f8f" stroke-width="1.8"/><path d="M5.5 11H16.5M11 5.5V16.5" stroke="#4a5fa5" stroke-width="2.4"/></svg>
<svg style="left:77.5px;top:880.5px" width="41" height="35" viewBox="0 0 41 35"><path d="M0 0H16.5L20 4.7H37.7V10H9L5 35H0Z" fill="#7f7f7f"/><path d="M8.2 12.2H41L38.5 35H3.8Z" fill="#e8b563"/></svg>
<span id="t55" class="t" style="left:128.5px;top:880.67px;font-size:28.97px;line-height:28.97px;color:#000;-webkit-text-stroke:0.3px #000;letter-spacing:-0.296px">Type Standards A</span>
<div class="hd" style="left:59px;top:941px;width:15px"></div>
<svg style="left:35px;top:928.1px" width="22" height="22" viewBox="0 0 22 22"><defs><linearGradient id="eg" x1="0" y1="0" x2="0" y2="1"><stop offset="0" stop-color="#fff"/><stop offset="0.5" stop-color="#f4f4f4"/><stop offset="1" stop-color="#d4d4d4"/></linearGradient></defs><rect x="1" y="1" width="20" height="20" rx="3" fill="url(#eg)" stroke="#8f8f8f" stroke-width="1.8"/><path d="M5.5 11H16.5M11 5.5V16.5" stroke="#4a5fa5" stroke-width="2.4"/></svg>
<svg style="left:77.5px;top:925.5px" width="41" height="35" viewBox="0 0 41 35"><path d="M0 0H16.5L20 4.7H37.7V10H9L5 35H0Z" fill="#7f7f7f"/><path d="M8.2 12.2H41L38.5 35H3.8Z" fill="#e8b563"/></svg>
<span id="t56" class="t" style="left:128.5px;top:925.67px;font-size:28.97px;line-height:28.97px;color:#000;-webkit-text-stroke:0.3px #000;letter-spacing:-0.521px">Type Standards B</span>
<div class="hd" style="left:59px;top:986px;width:15px"></div>
<svg style="left:35px;top:973.1px" width="22" height="22" viewBox="0 0 22 22"><defs><linearGradient id="eg" x1="0" y1="0" x2="0" y2="1"><stop offset="0" stop-color="#fff"/><stop offset="0.5" stop-color="#f4f4f4"/><stop offset="1" stop-color="#d4d4d4"/></linearGradient></defs><rect x="1" y="1" width="20" height="20" rx="3" fill="url(#eg)" stroke="#8f8f8f" stroke-width="1.8"/><path d="M5.5 11H16.5M11 5.5V16.5" stroke="#4a5fa5" stroke-width="2.4"/></svg>
<svg style="left:77.5px;top:970.5px" width="41" height="35" viewBox="0 0 41 35"><path d="M0 0H16.5L20 4.7H37.7V10H9L5 35H0Z" fill="#7f7f7f"/><path d="M8.2 12.2H41L38.5 35H3.8Z" fill="#e8b563"/></svg>
<span id="t57" class="t" style="left:128.5px;top:970.67px;font-size:28.97px;line-height:28.97px;color:#000;-webkit-text-stroke:0.3px #000;letter-spacing:-0.496px">Type Standards C</span>
<div class="hd" style="left:59px;top:1031px;width:15px"></div>
<svg style="left:35px;top:1018.1px" width="22" height="22" viewBox="0 0 22 22"><defs><linearGradient id="eg" x1="0" y1="0" x2="0" y2="1"><stop offset="0" stop-color="#fff"/><stop offset="0.5" stop-color="#f4f4f4"/><stop offset="1" stop-color="#d4d4d4"/></linearGradient></defs><rect x="1" y="1" width="20" height="20" rx="3" fill="url(#eg)" stroke="#8f8f8f" stroke-width="1.8"/><path d="M5.5 11H16.5M11 5.5V16.5" stroke="#4a5fa5" stroke-width="2.4"/></svg>
<svg style="left:77.5px;top:1015.5px" width="41" height="35" viewBox="0 0 41 35"><path d="M0 0H16.5L20 4.7H37.7V10H9L5 35H0Z" fill="#7f7f7f"/><path d="M8.2 12.2H41L38.5 35H3.8Z" fill="#e8b563"/></svg>
<span id="t58" class="t" style="left:128.5px;top:1015.67px;font-size:28.97px;line-height:28.97px;color:#000;-webkit-text-stroke:0.3px #000;letter-spacing:-0.426px">Type Standards</span>
<div class="hd" style="left:59px;top:1076px;width:15px"></div>
<svg style="left:35px;top:1063.1px" width="22" height="22" viewBox="0 0 22 22"><defs><linearGradient id="eg" x1="0" y1="0" x2="0" y2="1"><stop offset="0" stop-color="#fff"/><stop offset="0.5" stop-color="#f4f4f4"/><stop offset="1" stop-color="#d4d4d4"/></linearGradient></defs><rect x="1" y="1" width="20" height="20" rx="3" fill="url(#eg)" stroke="#8f8f8f" stroke-width="1.8"/><path d="M5.5 11H16.5M11 5.5V16.5" stroke="#4a5fa5" stroke-width="2.4"/></svg>
<svg style="left:77.5px;top:1060.5px" width="41" height="35" viewBox="0 0 41 35"><path d="M0 0H16.5L20 4.7H37.7V10H9L5 35H0Z" fill="#7f7f7f"/><path d="M8.2 12.2H41L38.5 35H3.8Z" fill="#e8b563"/></svg>
<span id="t59" class="t" style="left:128.5px;top:1060.67px;font-size:28.97px;line-height:28.97px;color:#000;-webkit-text-stroke:0.3px #000;letter-spacing:-0.127px">Check List</span>
<span id="t60" class="t" style="left:28.3px;top:1926.47px;font-size:28.97px;line-height:28.97px;color:#fff;letter-spacing:-0.506px">Database</span>
<div style="left:165px;top:1913.5px;width:98.5px;height:48.5px;background:#fff;"></div>
<span id="t61" class="t" style="left:178px;top:1926.47px;font-size:28.97px;line-height:28.97px;color:#000;letter-spacing:-0.957px">Rules</span>
<svg style="left:957px;top:260px" width="41" height="40.5" viewBox="0 0 41 40.5"><g transform="scale(0.672)"><path d="M30 0L61 31H49V59H36V40H25V59H13V31H0Z" fill="#7a7a7a"/><path d="M43 0H53.4V14.5L43 4.5Z" fill="#3b78b4"/></g></svg>
<span id="t62" class="t" style="left:1031.5px;top:265.69px;font-size:29.43px;line-height:29.43px;color:#fff;letter-spacing:0.000px">Home | Dashboard</span>
<svg style="left:1385px;top:260.5px" width="33" height="39.5" viewBox="0 0 33 39.5"><defs><linearGradient id="rg1" x1="0" y1="0" x2="0" y2="1"><stop offset="0" stop-color="#ea7440"/><stop offset="1" stop-color="#c9320f"/></linearGradient></defs>
<path d="M6 26L3.5 37L9.5 34.5L13 39.5L17 29ZM27 26L29.5 37L23.5 34.5L20 39.5L16 29Z" fill="#c9320f"/>
<polygon fill="url(#rg1)" points="16.5,0.1 19.3,2.6 22.8,1.3 24.4,4.7 28.1,4.9 28.3,8.6 31.7,10.2 30.4,13.7 32.9,16.5 30.4,19.3 31.7,22.8 28.3,24.4 28.1,28.1 24.4,28.3 22.8,31.7 19.3,30.4 16.5,32.9 13.7,30.4 10.2,31.7 8.6,28.3 4.9,28.1 4.7,24.4 1.3,22.8 2.6,19.3 0.1,16.5 2.6,13.7 1.3,10.2 4.7,8.6 4.9,4.9 8.6,4.7 10.2,1.3 13.7,2.6"/>
<circle cx="16.5" cy="16.5" r="9.6" fill="none" stroke="#f4ad90" stroke-width="1.7"/></svg>
<span id="t63" class="t" style="left:1463.8px;top:266.07px;font-size:28.97px;line-height:28.97px;color:#fff;letter-spacing:-0.944px">EN ISO 3691-1:2020</span>
<div style="left:1808.7px;top:255.8px;width:500.5px;height:48px;background:#fff29d;"></div>
<svg style="left:1831px;top:260.5px" width="33" height="39.5" viewBox="0 0 33 39.5"><defs><linearGradient id="rg2" x1="0" y1="0" x2="0" y2="1"><stop offset="0" stop-color="#ea7440"/><stop offset="1" stop-color="#c9320f"/></linearGradient></defs>
<path d="M6 26L3.5 37L9.5 34.5L13 39.5L17 29ZM27 26L29.5 37L23.5 34.5L20 39.5L16 29Z" fill="#c9320f"/>
<polygon fill="url(#rg2)" points="16.5,0.1 19.3,2.6 22.8,1.3 24.4,4.7 28.1,4.9 28.3,8.6 31.7,10.2 30.4,13.7 32.9,16.5 30.4,19.3 31.7,22.8 28.3,24.4 28.1,28.1 24.4,28.3 22.8,31.7 19.3,30.4 16.5,32.9 13.7,30.4 10.2,31.7 8.6,28.3 4.9,28.1 4.7,24.4 1.3,22.8 2.6,19.3 0.1,16.5 2.6,13.7 1.3,10.2 4.7,8.6 4.9,4.9 8.6,4.7 10.2,1.3 13.7,2.6"/>
<circle cx="16.5" cy="16.5" r="9.6" fill="none" stroke="#f4ad90" stroke-width="1.7"/></svg>
<span id="t64" class="t" style="left:1877px;top:265.86px;font-size:29.23px;line-height:29.23px;color:#1b1b1b;letter-spacing:0.000px">Check list carrelli elevatori ...</span>
<svg style="left:2271.5px;top:269.5px" width="22" height="20" viewBox="0 0 22 20"><path d="M1.5 1.5L20.5 19.5M20.5 1.5L1.5 19.5" stroke="#75704a" stroke-width="3.4"/></svg>
<svg style="left:3403.5px;top:280px" width="20.5" height="11" viewBox="0 0 20.5 11"><path d="M0 0H20.5L10.25 11Z" fill="#ced4e0"/></svg>
<div style="left:937.5px;top:303px;width:2502px;height:5.5px;background:#fff29d;"></div>
<div style="left:937.5px;top:308.5px;width:2500.5px;height:1653px;background:#8e9bbc;"></div>
<div style="left:940px;top:308.5px;width:2496px;height:1652px;background:#fff;"></div>
<div style="left:940px;top:308.5px;width:995px;height:61.5px;background:#f5f6f7;"></div>
<div style="left:949px;top:320px;width:4px;height:4px;background:#fff;"></div>
<div style="left:948px;top:319px;width:4px;height:4px;background:#a3a3a3;"></div>
<div style="left:949px;top:330px;width:4px;height:4px;background:#fff;"></div>
<div style="left:948px;top:329px;width:4px;height:4px;background:#a3a3a3;"></div>
<div style="left:949px;top:340px;width:4px;height:4px;background:#fff;"></div>
<div style="left:948px;top:339px;width:4px;height:4px;background:#a3a3a3;"></div>
<div style="left:949px;top:350px;width:4px;height:4px;background:#fff;"></div>
<div style="left:948px;top:349px;width:4px;height:4px;background:#a3a3a3;"></div>
<svg style="left:967.3px;top:317.8px" width="40" height="40" viewBox="0 0 40 40"><circle cx="20" cy="20" r="20" fill="#5bac8b"/><path d="M20 8.5V31.5M8.5 20H31.5" stroke="#fff" stroke-width="5.5"/></svg>
<span id="t65" class="t" style="left:1016.3px;top:323.16px;font-size:28.99px;line-height:28.99px;color:#000;letter-spacing:0.000px">New</span>
<svg style="left:1089.5px;top:336px" width="13.5" height="7.5" viewBox="0 0 13.5 7.5"><path d="M0 0H13.5L6.75 7.5Z" fill="#000"/></svg>
<svg style="left:1117px;top:317.5px" width="41" height="41" viewBox="0 0 41 41"><circle cx="28.3" cy="12.7" r="12.5" fill="#9b2626"/><path d="M7.2 33.8L26 15" stroke="#9b2626" stroke-width="11.5" stroke-linecap="square"/>
<path d="M28.6 12.4L45 -4" stroke="#f5f6f7" stroke-width="8.6"/><circle cx="7.9" cy="33.1" r="2.5" fill="#f5f6f7"/></svg>
<span id="t66" class="t" style="left:1166px;top:323.17px;font-size:28.97px;line-height:28.97px;color:#000;letter-spacing:-0.329px">Tools</span>
<svg style="left:1247.2px;top:336px" width="13.5" height="7.5" viewBox="0 0 13.5 7.5"><path d="M0 0H13.5L6.75 7.5Z" fill="#000"/></svg>
<svg style="left:1279.2px;top:318px" width="33.4" height="41" viewBox="0 0 33.4 41"><polygon points="13.4,0 20,0 20,28.7 33.4,15.3 33.4,24.3 16.7,41 0,24.3 0,15.3 13.4,28.7" fill="#3b78b4"/></svg>
<svg style="left:1339.3px;top:317.5px" width="33.4" height="41" viewBox="0 0 33.4 41"><g transform="rotate(180 16.7 20.5)"><polygon points="13.4,0 20,0 20,28.7 33.4,15.3 33.4,24.3 16.7,41 0,24.3 0,15.3 13.4,28.7" fill="#3b78b4"/></g></svg>
<svg style="left:1392.3px;top:320.3px" width="41" height="33.4" viewBox="0 0 41 33.4"><g transform="translate(41,0) rotate(90)"><polygon points="13.4,0 20,0 20,28.7 33.4,15.3 33.4,24.3 16.7,41 0,24.3 0,15.3 13.4,28.7" fill="#3b78b4"/></g></svg>
<svg style="left:1449.4px;top:322.7px" width="41" height="33.4" viewBox="0 0 41 33.4"><g transform="translate(0,33.4) rotate(-90)"><polygon points="13.4,0 20,0 20,28.7 33.4,15.3 33.4,24.3 16.7,41 0,24.3 0,15.3 13.4,28.7" fill="#3b78b4"/></g></svg>
<div style="left:1881px;top:370px;width:54px;height:1590px;background:#f0f0f0;"></div>
<div style="left:1899.5px;top:413px;width:4.5px;height:1197px;background:#8b8b8b;"></div>
<div style="left:940px;top:370px;width:941px;height:1590px;overflow:hidden"><div style="left:-940px;top:-370px;width:0;height:0">
<div class="vd" style="left:968px;top:408px;height:1609px"></div>
<div class="vd" style="left:1015px;top:414px;height:703px"></div>
<div class="vd" style="left:1015px;top:1224px;height:208px"></div>
<div class="vd" style="left:1063px;top:504px;height:343px"></div>
<div class="vd" style="left:1063px;top:909px;height:28px"></div>
<div class="vd" style="left:1063px;top:1269px;height:118px"></div>
<div style="left:1137.7px;top:595.4px;width:603px;height:45px;background:#f0f0f0;"></div>
<div class="hd" style="left:980px;top:396px;width:16px"></div>
<svg style="left:957.7px;top:385.7px" width="22" height="22" viewBox="0 0 22 22"><defs><linearGradient id="eg" x1="0" y1="0" x2="0" y2="1"><stop offset="0" stop-color="#fff"/><stop offset="0.5" stop-color="#f4f4f4"/><stop offset="1" stop-color="#d4d4d4"/></linearGradient></defs><rect x="1" y="1" width="20" height="20" rx="3" fill="url(#eg)" stroke="#8f8f8f" stroke-width="1.8"/><path d="M5.5 11H16.5" stroke="#4a5fa5" stroke-width="2.4"/></svg>
<svg style="left:994.6px;top:378px" width="41" height="35" viewBox="0 0 41 35"><path d="M0 0H16.5L20 4.7H37.7V10H9L5 35H0Z" fill="#7f7f7f"/><path d="M8.2 12.2H41L38.5 35H3.8Z" fill="#e8b563"/></svg>
<span id="t67" class="t" style="left:1047.2px;top:378.97px;font-size:28.97px;line-height:28.97px;color:#000;-webkit-text-stroke:0.3px #000;letter-spacing:-0.451px">0 - Premessa</span>
<div class="hd" style="left:1027px;top:441px;width:16px"></div>
<svg style="left:1005.2px;top:430.7px" width="22" height="22" viewBox="0 0 22 22"><defs><linearGradient id="eg" x1="0" y1="0" x2="0" y2="1"><stop offset="0" stop-color="#fff"/><stop offset="0.5" stop-color="#f4f4f4"/><stop offset="1" stop-color="#d4d4d4"/></linearGradient></defs><rect x="1" y="1" width="20" height="20" rx="3" fill="url(#eg)" stroke="#8f8f8f" stroke-width="1.8"/><path d="M5.5 11H16.5M11 5.5V16.5" stroke="#4a5fa5" stroke-width="2.4"/></svg>
<svg style="left:1042.1px;top:423px" width="41" height="35" viewBox="0 0 41 35"><path d="M0 0H16.5L20 4.7H37.7V10H9L5 35H0Z" fill="#7f7f7f"/><path d="M8.2 12.2H41L38.5 35H3.8Z" fill="#e8b563"/></svg>
<span id="t68" class="t" style="left:1094.7px;top:423.31px;font-size:29.75px;line-height:29.75px;color:#000;-webkit-text-stroke:0.3px #000;letter-spacing:0.000px">0.0 - Riferimenti</span>
<div class="hd" style="left:1027px;top:486px;width:16px"></div>
<svg style="left:1005.2px;top:475.7px" width="22" height="22" viewBox="0 0 22 22"><defs><linearGradient id="eg" x1="0" y1="0" x2="0" y2="1"><stop offset="0" stop-color="#fff"/><stop offset="0.5" stop-color="#f4f4f4"/><stop offset="1" stop-color="#d4d4d4"/></linearGradient></defs><rect x="1" y="1" width="20" height="20" rx="3" fill="url(#eg)" stroke="#8f8f8f" stroke-width="1.8"/><path d="M5.5 11H16.5" stroke="#4a5fa5" stroke-width="2.4"/></svg>
<svg style="left:1042.1px;top:468px" width="41" height="35" viewBox="0 0 41 35"><path d="M0 0H16.5L20 4.7H37.7V10H9L5 35H0Z" fill="#7f7f7f"/><path d="M8.2 12.2H41L38.5 35H3.8Z" fill="#e8b563"/></svg>
<span id="t69" class="t" style="left:1094.7px;top:468.42px;font-size:29.63px;line-height:29.63px;color:#000;-webkit-text-stroke:0.3px #000;letter-spacing:0.000px">0.1 - Analisi dei rischi stabilità</span>
<div class="hd" style="left:1065px;top:531px;width:26px"></div>
<svg style="left:1093px;top:509.2px" width="34" height="38" viewBox="0 0 34 38"><path d="M1.3 1.3H23L32.7 11V36.7H1.3Z" fill="#fcfcfc" stroke="#cdcdcd" stroke-width="2" stroke-linejoin="round"/><path d="M23 1.3V11H32.7" fill="#f2f2f2" stroke="#d6d6d6" stroke-width="1.4"/>
<path d="M7 8.5H17M7 13.5H17M7 18.5H26.5M7 23.5H26.5M7 28.5H26.5" stroke="#bcc6e8" stroke-width="1.9"/></svg>
<span id="t70" class="t" style="left:1142.2px;top:513.97px;font-size:28.97px;line-height:28.97px;color:#000;-webkit-text-stroke:0.3px #000;letter-spacing:-0.014px">0.1.1 - Rovesciamento</span>
<div class="hd" style="left:1065px;top:576px;width:26px"></div>
<svg style="left:1093px;top:554.2px" width="34" height="38" viewBox="0 0 34 38"><path d="M1.3 1.3H23L32.7 11V36.7H1.3Z" fill="#fcfcfc" stroke="#cdcdcd" stroke-width="2" stroke-linejoin="round"/><path d="M23 1.3V11H32.7" fill="#f2f2f2" stroke="#d6d6d6" stroke-width="1.4"/>
<path d="M7 8.5H17M7 13.5H17M7 18.5H26.5M7 23.5H26.5M7 28.5H26.5" stroke="#bcc6e8" stroke-width="1.9"/></svg>
<span id="t71" class="t" style="left:1142.2px;top:558.46px;font-size:29.59px;line-height:29.59px;color:#000;-webkit-text-stroke:0.3px #000;letter-spacing:0.000px">0.1.2 - Condizioni Particolari</span>
<div class="hd" style="left:1065px;top:621px;width:26px"></div>
<svg style="left:1093px;top:599.2px" width="34" height="38" viewBox="0 0 34 38"><path d="M1.3 1.3H23L32.7 11V36.7H1.3Z" fill="#fcfcfc" stroke="#cdcdcd" stroke-width="2" stroke-linejoin="round"/><path d="M23 1.3V11H32.7" fill="#f2f2f2" stroke="#d6d6d6" stroke-width="1.4"/>
<path d="M7 8.5H17M7 13.5H17M7 18.5H26.5M7 23.5H26.5M7 28.5H26.5" stroke="#bcc6e8" stroke-width="1.9"/></svg>
<span id="t72" class="t" style="left:1142.2px;top:603.54px;font-size:29.49px;line-height:29.49px;color:#000;-webkit-text-stroke:0.3px #000;letter-spacing:0.000px">0.1.3 - Pericolo di rovesciamento accidentale</span>
<div class="hd" style="left:1065px;top:666px;width:26px"></div>
<svg style="left:1093px;top:644.2px" width="34" height="38" viewBox="0 0 34 38"><path d="M1.3 1.3H23L32.7 11V36.7H1.3Z" fill="#fcfcfc" stroke="#cdcdcd" stroke-width="2" stroke-linejoin="round"/><path d="M23 1.3V11H32.7" fill="#f2f2f2" stroke="#d6d6d6" stroke-width="1.4"/>
<path d="M7 8.5H17M7 13.5H17M7 18.5H26.5M7 23.5H26.5M7 28.5H26.5" stroke="#bcc6e8" stroke-width="1.9"/></svg>
<span id="t73" class="t" style="left:1142.2px;top:648.96px;font-size:28.99px;line-height:28.99px;color:#000;-webkit-text-stroke:0.3px #000;letter-spacing:0.000px">0.1.4 - Valutazione del Rischio</span>
<div class="hd" style="left:1065px;top:711px;width:26px"></div>
<svg style="left:1093px;top:689.2px" width="34" height="38" viewBox="0 0 34 38"><path d="M1.3 1.3H23L32.7 11V36.7H1.3Z" fill="#fcfcfc" stroke="#cdcdcd" stroke-width="2" stroke-linejoin="round"/><path d="M23 1.3V11H32.7" fill="#f2f2f2" stroke="#d6d6d6" stroke-width="1.4"/>
<path d="M7 8.5H17M7 13.5H17M7 18.5H26.5M7 23.5H26.5M7 28.5H26.5" stroke="#bcc6e8" stroke-width="1.9"/></svg>
<span id="t74" class="t" style="left:1142.2px;top:693.39px;font-size:29.66px;line-height:29.66px;color:#000;-webkit-text-stroke:0.3px #000;letter-spacing:0.000px">0.1.5 - Carrelli a maggiore pericolo di rovesciamento</span>
<div class="hd" style="left:1065px;top:756px;width:26px"></div>
<svg style="left:1093px;top:734.2px" width="34" height="38" viewBox="0 0 34 38"><path d="M1.3 1.3H23L32.7 11V36.7H1.3Z" fill="#fcfcfc" stroke="#cdcdcd" stroke-width="2" stroke-linejoin="round"/><path d="M23 1.3V11H32.7" fill="#f2f2f2" stroke="#d6d6d6" stroke-width="1.4"/>
<path d="M7 8.5H17M7 13.5H17M7 18.5H26.5M7 23.5H26.5M7 28.5H26.5" stroke="#bcc6e8" stroke-width="1.9"/></svg>
<span id="t75" class="t" style="left:1142.2px;top:738.10px;font-size:30.00px;line-height:30.00px;color:#000;-webkit-text-stroke:0.3px #000;letter-spacing:0.000px">0.1.6 - Interventi di prevenzione infortuni</span>
<div class="hd" style="left:1065px;top:801px;width:26px"></div>
<svg style="left:1093px;top:779.2px" width="34" height="38" viewBox="0 0 34 38"><path d="M1.3 1.3H23L32.7 11V36.7H1.3Z" fill="#fcfcfc" stroke="#cdcdcd" stroke-width="2" stroke-linejoin="round"/><path d="M23 1.3V11H32.7" fill="#f2f2f2" stroke="#d6d6d6" stroke-width="1.4"/>
<path d="M7 8.5H17M7 13.5H17M7 18.5H26.5M7 23.5H26.5M7 28.5H26.5" stroke="#bcc6e8" stroke-width="1.9"/></svg>
<span id="t76" class="t" style="left:1142.2px;top:783.66px;font-size:29.34px;line-height:29.34px;color:#000;-webkit-text-stroke:0.3px #000;letter-spacing:0.000px">0.1.7 - Zone di lavoro</span>
<div class="hd" style="left:1065px;top:846px;width:26px"></div>
<svg style="left:1093px;top:824.2px" width="34" height="38" viewBox="0 0 34 38"><path d="M1.3 1.3H23L32.7 11V36.7H1.3Z" fill="#fcfcfc" stroke="#cdcdcd" stroke-width="2" stroke-linejoin="round"/><path d="M23 1.3V11H32.7" fill="#f2f2f2" stroke="#d6d6d6" stroke-width="1.4"/>
<path d="M7 8.5H17M7 13.5H17M7 18.5H26.5M7 23.5H26.5M7 28.5H26.5" stroke="#bcc6e8" stroke-width="1.9"/></svg>
<span id="t77" class="t" style="left:1142.2px;top:828.14px;font-size:29.95px;line-height:29.95px;color:#000;-webkit-text-stroke:0.3px #000;letter-spacing:0.000px">0.1.8 - Verifica delle compatibilità</span>
<div class="hd" style="left:1027px;top:891px;width:16px"></div>
<svg style="left:1005.2px;top:880.7px" width="22" height="22" viewBox="0 0 22 22"><defs><linearGradient id="eg" x1="0" y1="0" x2="0" y2="1"><stop offset="0" stop-color="#fff"/><stop offset="0.5" stop-color="#f4f4f4"/><stop offset="1" stop-color="#d4d4d4"/></linearGradient></defs><rect x="1" y="1" width="20" height="20" rx="3" fill="url(#eg)" stroke="#8f8f8f" stroke-width="1.8"/><path d="M5.5 11H16.5" stroke="#4a5fa5" stroke-width="2.4"/></svg>
<svg style="left:1042.1px;top:873px" width="41" height="35" viewBox="0 0 41 35"><path d="M0 0H16.5L20 4.7H37.7V10H9L5 35H0Z" fill="#7f7f7f"/><path d="M8.2 12.2H41L38.5 35H3.8Z" fill="#e8b563"/></svg>
<span id="t78" class="t" style="left:1094.7px;top:872.68px;font-size:30.50px;line-height:30.50px;color:#000;-webkit-text-stroke:0.3px #000;letter-spacing:0.000px">0.2 - Incidenti tipici</span>
<div class="hd" style="left:1065px;top:936px;width:26px"></div>
<svg style="left:1093px;top:914.2px" width="34" height="38" viewBox="0 0 34 38"><path d="M1.3 1.3H23L32.7 11V36.7H1.3Z" fill="#fcfcfc" stroke="#cdcdcd" stroke-width="2" stroke-linejoin="round"/><path d="M23 1.3V11H32.7" fill="#f2f2f2" stroke="#d6d6d6" stroke-width="1.4"/>
<path d="M7 8.5H17M7 13.5H17M7 18.5H26.5M7 23.5H26.5M7 28.5H26.5" stroke="#bcc6e8" stroke-width="1.9"/></svg>
<span id="t79" class="t" style="left:1142.2px;top:918.01px;font-size:30.11px;line-height:30.11px;color:#000;-webkit-text-stroke:0.3px #000;letter-spacing:0.000px">0.2.1 - Incidenti tipici</span>
<div class="hd" style="left:1027px;top:981px;width:16px"></div>
<svg style="left:1005.2px;top:970.7px" width="22" height="22" viewBox="0 0 22 22"><defs><linearGradient id="eg" x1="0" y1="0" x2="0" y2="1"><stop offset="0" stop-color="#fff"/><stop offset="0.5" stop-color="#f4f4f4"/><stop offset="1" stop-color="#d4d4d4"/></linearGradient></defs><rect x="1" y="1" width="20" height="20" rx="3" fill="url(#eg)" stroke="#8f8f8f" stroke-width="1.8"/><path d="M5.5 11H16.5M11 5.5V16.5" stroke="#4a5fa5" stroke-width="2.4"/></svg>
<svg style="left:1042.1px;top:963px" width="41" height="35" viewBox="0 0 41 35"><path d="M0 0H16.5L20 4.7H37.7V10H9L5 35H0Z" fill="#7f7f7f"/><path d="M8.2 12.2H41L38.5 35H3.8Z" fill="#e8b563"/></svg>
<span id="t80" class="t" style="left:1094.7px;top:963.68px;font-size:29.32px;line-height:29.32px;color:#000;-webkit-text-stroke:0.3px #000;letter-spacing:0.000px">0.3 - Misure di Prevenzione</span>
<div class="hd" style="left:1027px;top:1026px;width:16px"></div>
<svg style="left:1005.2px;top:1015.7px" width="22" height="22" viewBox="0 0 22 22"><defs><linearGradient id="eg" x1="0" y1="0" x2="0" y2="1"><stop offset="0" stop-color="#fff"/><stop offset="0.5" stop-color="#f4f4f4"/><stop offset="1" stop-color="#d4d4d4"/></linearGradient></defs><rect x="1" y="1" width="20" height="20" rx="3" fill="url(#eg)" stroke="#8f8f8f" stroke-width="1.8"/><path d="M5.5 11H16.5M11 5.5V16.5" stroke="#4a5fa5" stroke-width="2.4"/></svg>
<svg style="left:1042.1px;top:1008px" width="41" height="35" viewBox="0 0 41 35"><path d="M0 0H16.5L20 4.7H37.7V10H9L5 35H0Z" fill="#7f7f7f"/><path d="M8.2 12.2H41L38.5 35H3.8Z" fill="#e8b563"/></svg>
<span id="t81" class="t" style="left:1094.7px;top:1008.52px;font-size:29.51px;line-height:29.51px;color:#000;-webkit-text-stroke:0.3px #000;letter-spacing:0.000px">0.4 - Misure di Protezione</span>
<div class="hd" style="left:1027px;top:1071px;width:16px"></div>
<svg style="left:1005.2px;top:1060.7px" width="22" height="22" viewBox="0 0 22 22"><defs><linearGradient id="eg" x1="0" y1="0" x2="0" y2="1"><stop offset="0" stop-color="#fff"/><stop offset="0.5" stop-color="#f4f4f4"/><stop offset="1" stop-color="#d4d4d4"/></linearGradient></defs><rect x="1" y="1" width="20" height="20" rx="3" fill="url(#eg)" stroke="#8f8f8f" stroke-width="1.8"/><path d="M5.5 11H16.5M11 5.5V16.5" stroke="#4a5fa5" stroke-width="2.4"/></svg>
<svg style="left:1042.1px;top:1053px" width="41" height="35" viewBox="0 0 41 35"><path d="M0 0H16.5L20 4.7H37.7V10H9L5 35H0Z" fill="#7f7f7f"/><path d="M8.2 12.2H41L38.5 35H3.8Z" fill="#e8b563"/></svg>
<span id="t82" class="t" style="left:1094.7px;top:1053.97px;font-size:28.97px;line-height:28.97px;color:#000;-webkit-text-stroke:0.3px #000;letter-spacing:-0.066px">0.5 - Scelta del Sistema di Ritenuta</span>
<div class="hd" style="left:1027px;top:1116px;width:16px"></div>
<svg style="left:1005.2px;top:1105.7px" width="22" height="22" viewBox="0 0 22 22"><defs><linearGradient id="eg" x1="0" y1="0" x2="0" y2="1"><stop offset="0" stop-color="#fff"/><stop offset="0.5" stop-color="#f4f4f4"/><stop offset="1" stop-color="#d4d4d4"/></linearGradient></defs><rect x="1" y="1" width="20" height="20" rx="3" fill="url(#eg)" stroke="#8f8f8f" stroke-width="1.8"/><path d="M5.5 11H16.5M11 5.5V16.5" stroke="#4a5fa5" stroke-width="2.4"/></svg>
<svg style="left:1042.1px;top:1098px" width="41" height="35" viewBox="0 0 41 35"><path d="M0 0H16.5L20 4.7H37.7V10H9L5 35H0Z" fill="#7f7f7f"/><path d="M8.2 12.2H41L38.5 35H3.8Z" fill="#e8b563"/></svg>
<span id="t83" class="t" style="left:1094.7px;top:1098.12px;font-size:29.98px;line-height:29.98px;color:#000;-webkit-text-stroke:0.3px #000;letter-spacing:0.000px">0.6 - Manutenzione</span>
<div class="hd" style="left:980px;top:1161px;width:16px"></div>
<svg style="left:957.7px;top:1150.7px" width="22" height="22" viewBox="0 0 22 22"><defs><linearGradient id="eg" x1="0" y1="0" x2="0" y2="1"><stop offset="0" stop-color="#fff"/><stop offset="0.5" stop-color="#f4f4f4"/><stop offset="1" stop-color="#d4d4d4"/></linearGradient></defs><rect x="1" y="1" width="20" height="20" rx="3" fill="url(#eg)" stroke="#8f8f8f" stroke-width="1.8"/><path d="M5.5 11H16.5M11 5.5V16.5" stroke="#4a5fa5" stroke-width="2.4"/></svg>
<svg style="left:994.6px;top:1143px" width="41" height="35" viewBox="0 0 41 35"><path d="M0 0H16.5L20 4.7H37.7V10H9L5 35H0Z" fill="#7f7f7f"/><path d="M8.2 12.2H41L38.5 35H3.8Z" fill="#e8b563"/></svg>
<span id="t84" class="t" style="left:1047.2px;top:1143.41px;font-size:29.64px;line-height:29.64px;color:#000;-webkit-text-stroke:0.3px #000;letter-spacing:0.000px">1 - Esecuzione dei controlli</span>
<div class="hd" style="left:980px;top:1206px;width:16px"></div>
<svg style="left:957.7px;top:1195.7px" width="22" height="22" viewBox="0 0 22 22"><defs><linearGradient id="eg" x1="0" y1="0" x2="0" y2="1"><stop offset="0" stop-color="#fff"/><stop offset="0.5" stop-color="#f4f4f4"/><stop offset="1" stop-color="#d4d4d4"/></linearGradient></defs><rect x="1" y="1" width="20" height="20" rx="3" fill="url(#eg)" stroke="#8f8f8f" stroke-width="1.8"/><path d="M5.5 11H16.5" stroke="#4a5fa5" stroke-width="2.4"/></svg>
<svg style="left:994.6px;top:1188px" width="41" height="35" viewBox="0 0 41 35"><path d="M0 0H16.5L20 4.7H37.7V10H9L5 35H0Z" fill="#7f7f7f"/><path d="M8.2 12.2H41L38.5 35H3.8Z" fill="#e8b563"/></svg>
<span id="t85" class="t" style="left:1047.2px;top:1188.15px;font-size:29.94px;line-height:29.94px;color:#000;-webkit-text-stroke:0.3px #000;letter-spacing:0.000px">2 - Dispositivo di sollevamento</span>
<div class="hd" style="left:1027px;top:1251px;width:16px"></div>
<svg style="left:1005.2px;top:1240.7px" width="22" height="22" viewBox="0 0 22 22"><defs><linearGradient id="eg" x1="0" y1="0" x2="0" y2="1"><stop offset="0" stop-color="#fff"/><stop offset="0.5" stop-color="#f4f4f4"/><stop offset="1" stop-color="#d4d4d4"/></linearGradient></defs><rect x="1" y="1" width="20" height="20" rx="3" fill="url(#eg)" stroke="#8f8f8f" stroke-width="1.8"/><path d="M5.5 11H16.5" stroke="#4a5fa5" stroke-width="2.4"/></svg>
<svg style="left:1042.1px;top:1233px" width="41" height="35" viewBox="0 0 41 35"><path d="M0 0H16.5L20 4.7H37.7V10H9L5 35H0Z" fill="#7f7f7f"/><path d="M8.2 12.2H41L38.5 35H3.8Z" fill="#e8b563"/></svg>
<span id="t86" class="t" style="left:1094.7px;top:1233.80px;font-size:29.18px;line-height:29.18px;color:#000;-webkit-text-stroke:0.3px #000;letter-spacing:0.000px">2.1 - Forche a sezione piena, chiavistelli e fermi</span>
<div class="hd" style="left:1065px;top:1296px;width:26px"></div>
<svg style="left:1093px;top:1274.2px" width="34" height="38" viewBox="0 0 34 38"><path d="M1.3 1.3H23L32.7 11V36.7H1.3Z" fill="#fcfcfc" stroke="#cdcdcd" stroke-width="2" stroke-linejoin="round"/><path d="M23 1.3V11H32.7" fill="#f2f2f2" stroke="#d6d6d6" stroke-width="1.4"/>
<path d="M7 8.5H17M7 13.5H17M7 18.5H26.5M7 23.5H26.5M7 28.5H26.5" stroke="#bcc6e8" stroke-width="1.9"/></svg>
<span id="t87" class="t" style="left:1142.2px;top:1278.88px;font-size:29.08px;line-height:29.08px;color:#000;-webkit-text-stroke:0.3px #000;letter-spacing:0.000px">2.1.1 - Spessore in corrispondenza del tallone forca</span>
<div class="hd" style="left:1065px;top:1341px;width:26px"></div>
<svg style="left:1093px;top:1319.2px" width="34" height="38" viewBox="0 0 34 38"><path d="M1.3 1.3H23L32.7 11V36.7H1.3Z" fill="#fcfcfc" stroke="#cdcdcd" stroke-width="2" stroke-linejoin="round"/><path d="M23 1.3V11H32.7" fill="#f2f2f2" stroke="#d6d6d6" stroke-width="1.4"/>
<path d="M7 8.5H17M7 13.5H17M7 18.5H26.5M7 23.5H26.5M7 28.5H26.5" stroke="#bcc6e8" stroke-width="1.9"/></svg>
<span id="t88" class="t" style="left:1142.2px;top:1323.53px;font-size:29.49px;line-height:29.49px;color:#000;-webkit-text-stroke:0.3px #000;letter-spacing:0.000px">2.1.2 - Deformazione permanente forca</span>
<div class="hd" style="left:1065px;top:1386px;width:26px"></div>
<svg style="left:1093px;top:1364.2px" width="34" height="38" viewBox="0 0 34 38"><path d="M1.3 1.3H23L32.7 11V36.7H1.3Z" fill="#fcfcfc" stroke="#cdcdcd" stroke-width="2" stroke-linejoin="round"/><path d="M23 1.3V11H32.7" fill="#f2f2f2" stroke="#d6d6d6" stroke-width="1.4"/>
<path d="M7 8.5H17M7 13.5H17M7 18.5H26.5M7 23.5H26.5M7 28.5H26.5" stroke="#bcc6e8" stroke-width="1.9"/></svg>
<span id="t89" class="t" style="left:1142.2px;top:1368.97px;font-size:28.97px;line-height:28.97px;color:#000;-webkit-text-stroke:0.3px #000;letter-spacing:-0.027px">2.1.3 - Cricche</span>
<div class="hd" style="left:1027px;top:1431px;width:16px"></div>
<svg style="left:1005.2px;top:1420.7px" width="22" height="22" viewBox="0 0 22 22"><defs><linearGradient id="eg" x1="0" y1="0" x2="0" y2="1"><stop offset="0" stop-color="#fff"/><stop offset="0.5" stop-color="#f4f4f4"/><stop offset="1" stop-color="#d4d4d4"/></linearGradient></defs><rect x="1" y="1" width="20" height="20" rx="3" fill="url(#eg)" stroke="#8f8f8f" stroke-width="1.8"/><path d="M5.5 11H16.5M11 5.5V16.5" stroke="#4a5fa5" stroke-width="2.4"/></svg>
<svg style="left:1042.1px;top:1413px" width="41" height="35" viewBox="0 0 41 35"><path d="M0 0H16.5L20 4.7H37.7V10H9L5 35H0Z" fill="#7f7f7f"/><path d="M8.2 12.2H41L38.5 35H3.8Z" fill="#e8b563"/></svg>
<span id="t90" class="t" style="left:1094.7px;top:1413.15px;font-size:29.95px;line-height:29.95px;color:#000;-webkit-text-stroke:0.3px #000;letter-spacing:0.000px">2.2 - Forche di tipo ricoprente</span>
<div class="hd" style="left:980px;top:1476px;width:16px"></div>
<svg style="left:957.7px;top:1465.7px" width="22" height="22" viewBox="0 0 22 22"><defs><linearGradient id="eg" x1="0" y1="0" x2="0" y2="1"><stop offset="0" stop-color="#fff"/><stop offset="0.5" stop-color="#f4f4f4"/><stop offset="1" stop-color="#d4d4d4"/></linearGradient></defs><rect x="1" y="1" width="20" height="20" rx="3" fill="url(#eg)" stroke="#8f8f8f" stroke-width="1.8"/><path d="M5.5 11H16.5M11 5.5V16.5" stroke="#4a5fa5" stroke-width="2.4"/></svg>
<svg style="left:994.6px;top:1458px" width="41" height="35" viewBox="0 0 41 35"><path d="M0 0H16.5L20 4.7H37.7V10H9L5 35H0Z" fill="#7f7f7f"/><path d="M8.2 12.2H41L38.5 35H3.8Z" fill="#e8b563"/></svg>
<span id="t91" class="t" style="left:1047.2px;top:1458.97px;font-size:28.97px;line-height:28.97px;color:#000;-webkit-text-stroke:0.3px #000;letter-spacing:-0.030px">3 - Catene</span>
<div class="hd" style="left:980px;top:1521px;width:16px"></div>
<svg style="left:957.7px;top:1510.7px" width="22" height="22" viewBox="0 0 22 22"><defs><linearGradient id="eg" x1="0" y1="0" x2="0" y2="1"><stop offset="0" stop-color="#fff"/><stop offset="0.5" stop-color="#f4f4f4"/><stop offset="1" stop-color="#d4d4d4"/></linearGradient></defs><rect x="1" y="1" width="20" height="20" rx="3" fill="url(#eg)" stroke="#8f8f8f" stroke-width="1.8"/><path d="M5.5 11H16.5M11 5.5V16.5" stroke="#4a5fa5" stroke-width="2.4"/></svg>
<svg style="left:994.6px;top:1503px" width="41" height="35" viewBox="0 0 41 35"><path d="M0 0H16.5L20 4.7H37.7V10H9L5 35H0Z" fill="#7f7f7f"/><path d="M8.2 12.2H41L38.5 35H3.8Z" fill="#e8b563"/></svg>
<span id="t92" class="t" style="left:1047.2px;top:1503.17px;font-size:29.93px;line-height:29.93px;color:#000;-webkit-text-stroke:0.3px #000;letter-spacing:0.000px">4 - Gruppo di sollevamento</span>
<div class="hd" style="left:980px;top:1566px;width:16px"></div>
<svg style="left:957.7px;top:1555.7px" width="22" height="22" viewBox="0 0 22 22"><defs><linearGradient id="eg" x1="0" y1="0" x2="0" y2="1"><stop offset="0" stop-color="#fff"/><stop offset="0.5" stop-color="#f4f4f4"/><stop offset="1" stop-color="#d4d4d4"/></linearGradient></defs><rect x="1" y="1" width="20" height="20" rx="3" fill="url(#eg)" stroke="#8f8f8f" stroke-width="1.8"/><path d="M5.5 11H16.5M11 5.5V16.5" stroke="#4a5fa5" stroke-width="2.4"/></svg>
<svg style="left:994.6px;top:1548px" width="41" height="35" viewBox="0 0 41 35"><path d="M0 0H16.5L20 4.7H37.7V10H9L5 35H0Z" fill="#7f7f7f"/><path d="M8.2 12.2H41L38.5 35H3.8Z" fill="#e8b563"/></svg>
<span id="t93" class="t" style="left:1047.2px;top:1548.95px;font-size:29.01px;line-height:29.01px;color:#000;-webkit-text-stroke:0.3px #000;letter-spacing:0.000px">5 - Accessori per la presa del carico</span>
<div class="hd" style="left:980px;top:1611px;width:16px"></div>
<svg style="left:957.7px;top:1600.7px" width="22" height="22" viewBox="0 0 22 22"><defs><linearGradient id="eg" x1="0" y1="0" x2="0" y2="1"><stop offset="0" stop-color="#fff"/><stop offset="0.5" stop-color="#f4f4f4"/><stop offset="1" stop-color="#d4d4d4"/></linearGradient></defs><rect x="1" y="1" width="20" height="20" rx="3" fill="url(#eg)" stroke="#8f8f8f" stroke-width="1.8"/><path d="M5.5 11H16.5M11 5.5V16.5" stroke="#4a5fa5" stroke-width="2.4"/></svg>
<svg style="left:994.6px;top:1593px" width="41" height="35" viewBox="0 0 41 35"><path d="M0 0H16.5L20 4.7H37.7V10H9L5 35H0Z" fill="#7f7f7f"/><path d="M8.2 12.2H41L38.5 35H3.8Z" fill="#e8b563"/></svg>
<span id="t94" class="t" style="left:1047.2px;top:1593.39px;font-size:29.66px;line-height:29.66px;color:#000;-webkit-text-stroke:0.3px #000;letter-spacing:0.000px">6 - Accessori amovibili per carrello elevatore</span>
<div class="hd" style="left:980px;top:1656px;width:16px"></div>
<svg style="left:957.7px;top:1645.7px" width="22" height="22" viewBox="0 0 22 22"><defs><linearGradient id="eg" x1="0" y1="0" x2="0" y2="1"><stop offset="0" stop-color="#fff"/><stop offset="0.5" stop-color="#f4f4f4"/><stop offset="1" stop-color="#d4d4d4"/></linearGradient></defs><rect x="1" y="1" width="20" height="20" rx="3" fill="url(#eg)" stroke="#8f8f8f" stroke-width="1.8"/><path d="M5.5 11H16.5M11 5.5V16.5" stroke="#4a5fa5" stroke-width="2.4"/></svg>
<svg style="left:994.6px;top:1638px" width="41" height="35" viewBox="0 0 41 35"><path d="M0 0H16.5L20 4.7H37.7V10H9L5 35H0Z" fill="#7f7f7f"/><path d="M8.2 12.2H41L38.5 35H3.8Z" fill="#e8b563"/></svg>
<span id="t95" class="t" style="left:1047.2px;top:1637.76px;font-size:30.41px;line-height:30.41px;color:#000;-webkit-text-stroke:0.3px #000;letter-spacing:0.000px">7 - Motore termico gasolio e relativi impianti</span>
<div class="hd" style="left:980px;top:1701px;width:16px"></div>
<svg style="left:957.7px;top:1690.7px" width="22" height="22" viewBox="0 0 22 22"><defs><linearGradient id="eg" x1="0" y1="0" x2="0" y2="1"><stop offset="0" stop-color="#fff"/><stop offset="0.5" stop-color="#f4f4f4"/><stop offset="1" stop-color="#d4d4d4"/></linearGradient></defs><rect x="1" y="1" width="20" height="20" rx="3" fill="url(#eg)" stroke="#8f8f8f" stroke-width="1.8"/><path d="M5.5 11H16.5M11 5.5V16.5" stroke="#4a5fa5" stroke-width="2.4"/></svg>
<svg style="left:994.6px;top:1683px" width="41" height="35" viewBox="0 0 41 35"><path d="M0 0H16.5L20 4.7H37.7V10H9L5 35H0Z" fill="#7f7f7f"/><path d="M8.2 12.2H41L38.5 35H3.8Z" fill="#e8b563"/></svg>
<span id="t96" class="t" style="left:1047.2px;top:1683.97px;font-size:28.97px;line-height:28.97px;color:#000;-webkit-text-stroke:0.3px #000;letter-spacing:-0.032px">8 - Freni</span>
<div class="hd" style="left:980px;top:1746px;width:16px"></div>
<svg style="left:957.7px;top:1735.7px" width="22" height="22" viewBox="0 0 22 22"><defs><linearGradient id="eg" x1="0" y1="0" x2="0" y2="1"><stop offset="0" stop-color="#fff"/><stop offset="0.5" stop-color="#f4f4f4"/><stop offset="1" stop-color="#d4d4d4"/></linearGradient></defs><rect x="1" y="1" width="20" height="20" rx="3" fill="url(#eg)" stroke="#8f8f8f" stroke-width="1.8"/><path d="M5.5 11H16.5M11 5.5V16.5" stroke="#4a5fa5" stroke-width="2.4"/></svg>
<svg style="left:994.6px;top:1728px" width="41" height="35" viewBox="0 0 41 35"><path d="M0 0H16.5L20 4.7H37.7V10H9L5 35H0Z" fill="#7f7f7f"/><path d="M8.2 12.2H41L38.5 35H3.8Z" fill="#e8b563"/></svg>
<span id="t97" class="t" style="left:1047.2px;top:1728.24px;font-size:29.85px;line-height:29.85px;color:#000;-webkit-text-stroke:0.3px #000;letter-spacing:0.000px">9 - Ruote e gommatura</span>
<div class="hd" style="left:980px;top:1791px;width:16px"></div>
<svg style="left:957.7px;top:1780.7px" width="22" height="22" viewBox="0 0 22 22"><defs><linearGradient id="eg" x1="0" y1="0" x2="0" y2="1"><stop offset="0" stop-color="#fff"/><stop offset="0.5" stop-color="#f4f4f4"/><stop offset="1" stop-color="#d4d4d4"/></linearGradient></defs><rect x="1" y="1" width="20" height="20" rx="3" fill="url(#eg)" stroke="#8f8f8f" stroke-width="1.8"/><path d="M5.5 11H16.5M11 5.5V16.5" stroke="#4a5fa5" stroke-width="2.4"/></svg>
<svg style="left:994.6px;top:1773px" width="41" height="35" viewBox="0 0 41 35"><path d="M0 0H16.5L20 4.7H37.7V10H9L5 35H0Z" fill="#7f7f7f"/><path d="M8.2 12.2H41L38.5 35H3.8Z" fill="#e8b563"/></svg>
<span id="t98" class="t" style="left:1047.2px;top:1773.21px;font-size:29.88px;line-height:29.88px;color:#000;-webkit-text-stroke:0.3px #000;letter-spacing:0.000px">10 - Posto di guida e comandi</span>
<div class="hd" style="left:980px;top:1836px;width:16px"></div>
<svg style="left:957.7px;top:1825.7px" width="22" height="22" viewBox="0 0 22 22"><defs><linearGradient id="eg" x1="0" y1="0" x2="0" y2="1"><stop offset="0" stop-color="#fff"/><stop offset="0.5" stop-color="#f4f4f4"/><stop offset="1" stop-color="#d4d4d4"/></linearGradient></defs><rect x="1" y="1" width="20" height="20" rx="3" fill="url(#eg)" stroke="#8f8f8f" stroke-width="1.8"/><path d="M5.5 11H16.5M11 5.5V16.5" stroke="#4a5fa5" stroke-width="2.4"/></svg>
<svg style="left:994.6px;top:1818px" width="41" height="35" viewBox="0 0 41 35"><path d="M0 0H16.5L20 4.7H37.7V10H9L5 35H0Z" fill="#7f7f7f"/><path d="M8.2 12.2H41L38.5 35H3.8Z" fill="#e8b563"/></svg>
<span id="t99" class="t" style="left:1047.2px;top:1818.23px;font-size:29.86px;line-height:29.86px;color:#000;-webkit-text-stroke:0.3px #000;letter-spacing:0.000px">11 - Sistema di ritenuta del conducente</span>
<div class="hd" style="left:980px;top:1881px;width:16px"></div>
<svg style="left:957.7px;top:1870.7px" width="22" height="22" viewBox="0 0 22 22"><defs><linearGradient id="eg" x1="0" y1="0" x2="0" y2="1"><stop offset="0" stop-color="#fff"/><stop offset="0.5" stop-color="#f4f4f4"/><stop offset="1" stop-color="#d4d4d4"/></linearGradient></defs><rect x="1" y="1" width="20" height="20" rx="3" fill="url(#eg)" stroke="#8f8f8f" stroke-width="1.8"/><path d="M5.5 11H16.5M11 5.5V16.5" stroke="#4a5fa5" stroke-width="2.4"/></svg>
<svg style="left:994.6px;top:1863px" width="41" height="35" viewBox="0 0 41 35"><path d="M0 0H16.5L20 4.7H37.7V10H9L5 35H0Z" fill="#7f7f7f"/><path d="M8.2 12.2H41L38.5 35H3.8Z" fill="#e8b563"/></svg>
<span id="t100" class="t" style="left:1047.2px;top:1863.67px;font-size:29.34px;line-height:29.34px;color:#000;-webkit-text-stroke:0.3px #000;letter-spacing:0.000px">16 - Specchi retrovisori</span>
<div class="hd" style="left:980px;top:1926px;width:16px"></div>
<svg style="left:957.7px;top:1915.7px" width="22" height="22" viewBox="0 0 22 22"><defs><linearGradient id="eg" x1="0" y1="0" x2="0" y2="1"><stop offset="0" stop-color="#fff"/><stop offset="0.5" stop-color="#f4f4f4"/><stop offset="1" stop-color="#d4d4d4"/></linearGradient></defs><rect x="1" y="1" width="20" height="20" rx="3" fill="url(#eg)" stroke="#8f8f8f" stroke-width="1.8"/><path d="M5.5 11H16.5M11 5.5V16.5" stroke="#4a5fa5" stroke-width="2.4"/></svg>
<svg style="left:994.6px;top:1908px" width="41" height="35" viewBox="0 0 41 35"><path d="M0 0H16.5L20 4.7H37.7V10H9L5 35H0Z" fill="#7f7f7f"/><path d="M8.2 12.2H41L38.5 35H3.8Z" fill="#e8b563"/></svg>
<span id="t101" class="t" style="left:1047.2px;top:1908.37px;font-size:29.68px;line-height:29.68px;color:#000;-webkit-text-stroke:0.3px #000;letter-spacing:0.000px">12 - Cabine chiuse con porte rigide</span>
<div class="hd" style="left:980px;top:1971px;width:16px"></div>
<svg style="left:957.7px;top:1960.7px" width="22" height="22" viewBox="0 0 22 22"><defs><linearGradient id="eg" x1="0" y1="0" x2="0" y2="1"><stop offset="0" stop-color="#fff"/><stop offset="0.5" stop-color="#f4f4f4"/><stop offset="1" stop-color="#d4d4d4"/></linearGradient></defs><rect x="1" y="1" width="20" height="20" rx="3" fill="url(#eg)" stroke="#8f8f8f" stroke-width="1.8"/><path d="M5.5 11H16.5M11 5.5V16.5" stroke="#4a5fa5" stroke-width="2.4"/></svg>
<svg style="left:994.6px;top:1953px" width="41" height="35" viewBox="0 0 41 35"><path d="M0 0H16.5L20 4.7H37.7V10H9L5 35H0Z" fill="#7f7f7f"/><path d="M8.2 12.2H41L38.5 35H3.8Z" fill="#e8b563"/></svg>
<span id="t102" class="t" style="left:1047.2px;top:1953.68px;font-size:29.32px;line-height:29.32px;color:#000;-webkit-text-stroke:0.3px #000;letter-spacing:0.000px">13 - Coperchio vano batteria</span>
</div></div>
<div style="left:1935px;top:308.5px;width:1501px;height:124.5px;background:#f5f6f7;"></div>
<div style="left:1943px;top:320px;width:4px;height:4px;background:#fff;"></div>
<div style="left:1942px;top:319px;width:4px;height:4px;background:#a3a3a3;"></div>
<div style="left:1943px;top:330px;width:4px;height:4px;background:#fff;"></div>
<div style="left:1942px;top:329px;width:4px;height:4px;background:#a3a3a3;"></div>
<div style="left:1943px;top:340px;width:4px;height:4px;background:#fff;"></div>
<div style="left:1942px;top:339px;width:4px;height:4px;background:#a3a3a3;"></div>
<div style="left:1943px;top:350px;width:4px;height:4px;background:#fff;"></div>
<div style="left:1942px;top:349px;width:4px;height:4px;background:#a3a3a3;"></div>
<span id="t103" class="t" style="left:1965.7px;top:323.17px;font-size:28.97px;line-height:28.97px;color:#000;letter-spacing:-0.564px">Code:</span>
<div style="left:2054px;top:311px;width:289.8px;height:56.5px;background:#fff;"></div>
<span id="t104" class="t" style="left:2060px;top:323.17px;font-size:28.97px;line-height:28.97px;color:#000;letter-spacing:-0.690px">0.1.3</span>
<span id="t105" class="t" style="left:2356px;top:323.17px;font-size:28.97px;line-height:28.97px;color:#000;letter-spacing:-0.287px">Title:</span>
<div style="left:2428.6px;top:311px;width:988px;height:56.5px;background:#fff;"></div>
<span id="t106" class="t" style="left:2437.5px;top:322.49px;font-size:29.79px;line-height:29.79px;color:#000;letter-spacing:0.000px">Pericolo di rovesciamento accidentale</span>
<div style="left:1943px;top:383px;width:4px;height:4px;background:#fff;"></div>
<div style="left:1942px;top:382px;width:4px;height:4px;background:#a3a3a3;"></div>
<div style="left:1943px;top:393px;width:4px;height:4px;background:#fff;"></div>
<div style="left:1942px;top:392px;width:4px;height:4px;background:#a3a3a3;"></div>
<div style="left:1943px;top:403px;width:4px;height:4px;background:#fff;"></div>
<div style="left:1942px;top:402px;width:4px;height:4px;background:#a3a3a3;"></div>
<div style="left:1943px;top:413px;width:4px;height:4px;background:#fff;"></div>
<div style="left:1942px;top:412px;width:4px;height:4px;background:#a3a3a3;"></div>
<div style="left:1958.8px;top:373px;width:375px;height:57px;background:#fff;"></div>
<div style="left:2304px;top:375px;width:28px;height:53px;background:#f7f7f7;"></div>
<span id="t107" class="t" style="left:1967px;top:385.47px;font-size:28.97px;line-height:28.97px;color:#000;letter-spacing:-0.015px">Tahoma</span>
<svg style="left:2311px;top:398.5px" width="13" height="7" viewBox="0 0 13 7"><path d="M0 0H13L6.5 7Z" fill="#000"/></svg>
<div style="left:2338px;top:373px;width:188px;height:57px;background:#fff;"></div>
<div style="left:2496px;top:375px;width:28px;height:53px;background:#f7f7f7;"></div>
<span id="t108" class="t" style="left:2346.3px;top:385.47px;font-size:28.97px;line-height:28.97px;color:#000;letter-spacing:-0.762px">8,5</span>
<svg style="left:2503.5px;top:398.5px" width="13" height="7" viewBox="0 0 13 7"><path d="M0 0H13L6.5 7Z" fill="#000"/></svg>
<div style="left:2536.5px;top:384px;width:2px;height:36px;background:#d6d6d6;"></div>
<span id="t109" class="t" style="left:2558.5px;top:382.86px;font-size:33.00px;line-height:33.00px;color:#000;font-weight:700;font-family:'Liberation Serif',serif;-webkit-text-stroke:0.7px #000;letter-spacing:1.484px">B</span>
<span id="t110" class="t" style="left:2617px;top:382.86px;font-size:33.00px;line-height:33.00px;color:#000;font-weight:700;font-family:'Liberation Serif',serif;font-style:italic;-webkit-text-stroke:0.5px #000;transform:scaleX(1.18);transform-origin:0 0;">I</span>
<span id="t111" class="t" style="left:2673px;top:383.70px;font-size:32.00px;line-height:32.00px;color:#000;font-weight:700;font-family:'Liberation Serif',serif;-webkit-text-stroke:0.9px #000;letter-spacing:0.391px">U</span>
<div style="left:2673.5px;top:413.5px;width:23px;height:2.6px;background:#111;"></div>
<div style="left:2724px;top:384px;width:2px;height:36px;background:#d6d6d6;"></div>
<svg style="left:2741.2px;top:385.5px" width="36" height="28" viewBox="0 0 36 28"><rect x="0" y="0" width="35.5" height="2.7" rx="1.2" fill="#222"/><rect x="0" y="5.05" width="25" height="2.7" rx="1.2" fill="#222"/><rect x="0" y="10.1" width="35.5" height="2.7" rx="1.2" fill="#222"/><rect x="0" y="15.15" width="25" height="2.7" rx="1.2" fill="#222"/><rect x="0" y="20.2" width="35.5" height="2.7" rx="1.2" fill="#222"/><rect x="0" y="25.25" width="25" height="2.7" rx="1.2" fill="#222"/></svg>
<svg style="left:2798.6px;top:385.5px" width="36" height="28" viewBox="0 0 36 28"><rect x="0" y="0" width="35.5" height="2.7" rx="1.2" fill="#222"/><rect x="5.25" y="5.05" width="25" height="2.7" rx="1.2" fill="#222"/><rect x="0" y="10.1" width="35.5" height="2.7" rx="1.2" fill="#222"/><rect x="5.25" y="15.15" width="25" height="2.7" rx="1.2" fill="#222"/><rect x="0" y="20.2" width="35.5" height="2.7" rx="1.2" fill="#222"/><rect x="5.25" y="25.25" width="25" height="2.7" rx="1.2" fill="#222"/></svg>
<svg style="left:2856px;top:385.5px" width="36" height="28" viewBox="0 0 36 28"><rect x="0" y="0" width="35.5" height="2.7" rx="1.2" fill="#222"/><rect x="10.5" y="5.05" width="25" height="2.7" rx="1.2" fill="#222"/><rect x="0" y="10.1" width="35.5" height="2.7" rx="1.2" fill="#222"/><rect x="10.5" y="15.15" width="25" height="2.7" rx="1.2" fill="#222"/><rect x="0" y="20.2" width="35.5" height="2.7" rx="1.2" fill="#222"/><rect x="10.5" y="25.25" width="25" height="2.7" rx="1.2" fill="#222"/></svg>
<div style="left:2904.2px;top:373.7px;width:56.7px;height:53.4px;box-sizing:border-box;border:2px solid #dadada;background:#f0f0f0"></div>
<div style="left:2909px;top:378.5px;width:47.5px;height:44px;background:#cccccc;"></div>
<svg style="left:2913.6px;top:385.5px" width="36" height="28" viewBox="0 0 36 28"><rect x="0" y="0" width="35.5" height="2.7" rx="1.2" fill="#111"/><rect x="0" y="5.05" width="35.5" height="2.7" rx="1.2" fill="#111"/><rect x="0" y="10.1" width="35.5" height="2.7" rx="1.2" fill="#111"/><rect x="0" y="15.15" width="35.5" height="2.7" rx="1.2" fill="#111"/><rect x="0" y="20.2" width="35.5" height="2.7" rx="1.2" fill="#111"/><rect x="0" y="25.25" width="35.5" height="2.7" rx="1.2" fill="#111"/></svg>
<div style="left:2969.3px;top:384px;width:2px;height:36px;background:#d6d6d6;"></div>
<svg style="left:2986.3px;top:382.5px" width="34" height="34" viewBox="0 0 34 34"><circle cx="4" cy="4" r="3.1" fill="#3a62b8"/><rect x="13" y="2.6" width="20" height="2.7" fill="#222"/><circle cx="4" cy="16.8" r="3.1" fill="#3a62b8"/><rect x="13" y="15.4" width="20" height="2.7" fill="#222"/><circle cx="4" cy="29.6" r="3.1" fill="#3a62b8"/><rect x="13" y="28.2" width="20" height="2.7" fill="#222"/></svg>
<svg style="left:3041.5px;top:382.5px" width="36" height="36" viewBox="0 0 36 36"><text x="1" y="8.5" font-size="11.5" font-weight="700" font-family="Liberation Sans,sans-serif" fill="#3a6ad0">1</text><rect x="13" y="2.6" width="22.5" height="2.7" fill="#222"/><text x="1" y="21.3" font-size="11.5" font-weight="700" font-family="Liberation Sans,sans-serif" fill="#3a6ad0">2</text><rect x="13" y="15.4" width="22.5" height="2.7" fill="#222"/><text x="1" y="34.1" font-size="11.5" font-weight="700" font-family="Liberation Sans,sans-serif" fill="#3a6ad0">3</text><rect x="13" y="28.2" width="22.5" height="2.7" fill="#222"/></svg>
<svg style="left:3093.7px;top:398.3px" width="15.8" height="8" viewBox="0 0 15.8 8"><path d="M0 0H15.8L7.9 8Z" fill="#000"/></svg>
<div style="left:3121.2px;top:384px;width:2px;height:36px;background:#d6d6d6;"></div>
<span id="t112" class="t" style="left:3140px;top:378.16px;font-size:41.00px;line-height:41.00px;color:#3a5aa2;font-weight:700;font-family:'Liberation Serif',serif;letter-spacing:0.391px">A</span>
<span id="t113" class="t" style="left:3200px;top:373.46px;font-size:41.00px;line-height:41.00px;color:#3a5aa2;font-weight:700;font-family:'Liberation Serif',serif;letter-spacing:0.391px">A</span>
<div style="left:3194px;top:410.7px;width:40px;height:9.5px;background:#ff500f;"></div>
<div style="left:3251.4px;top:384px;width:2px;height:36px;background:#d6d6d6;"></div>
<svg style="left:3266.8px;top:380.6px" width="39.5" height="39.5" viewBox="0 0 39.5 39.5"><rect x="1.3" y="1.3" width="37" height="37" rx="2" fill="#fff" stroke="#7a7a7a" stroke-width="2.6"/><circle cx="27.5" cy="10.5" r="5.3" fill="#eaa94a"/>
<path d="M4.5 24Q12 19 19.5 26Q27 32 35 29V35H4.5Z" fill="#8fcbb0"/></svg>
<span id="t114" class="t" style="left:3323.5px;top:381.00px;font-size:24.81px;line-height:24.81px;color:#222;letter-spacing:0.000px">abc</span>
<svg style="left:3328px;top:390px" width="34" height="31" viewBox="0 0 34 31"><path d="M2 15L8 12L14 20L29 1L33 5L15 30Z" fill="#cf3038" opacity="0.92"/></svg>
<div style="left:3409.4px;top:406px;width:22px;height:24px;background:linear-gradient(#f0f0f0,#c9c9c9)"></div>
<div style="left:3414.5px;top:410.5px;width:12px;height:2.4px;background:#111;"></div>
<svg style="left:3414px;top:416.5px" width="13" height="7" viewBox="0 0 13 7"><path d="M0 0H13L6.5 7Z" fill="#000"/></svg>
<span id="t115" class="t" style="left:1935px;top:437.97px;font-size:26.85px;line-height:26.85px;color:#000;-webkit-text-stroke:0.3px #000;letter-spacing:0.000px">Il pericolo di rovesciamento accidentale è maggiore quando:</span>
<span id="t116" class="t" style="left:1937px;top:469.83px;font-size:27.61px;line-height:27.61px;color:#000;-webkit-text-stroke:0.3px #000;letter-spacing:0.000px">- si affrontano le curve ad una velocità troppo sostenuta;</span>
<span id="t117" class="t" style="left:1937px;top:502.37px;font-size:27.56px;line-height:27.56px;color:#000;-webkit-text-stroke:0.3px #000;letter-spacing:0.000px">- si effettuano svolte repentine viaggiando in velocità;</span>
<span id="t118" class="t" style="left:1937px;top:535.68px;font-size:26.60px;line-height:26.60px;color:#000;-webkit-text-stroke:0.3px #000;letter-spacing:-0.036px">- ci si sposta con il carico sollevato;</span>
<span id="t119" class="t" style="left:1937px;top:567.96px;font-size:26.87px;line-height:26.87px;color:#000;-webkit-text-stroke:0.3px #000;letter-spacing:0.000px">- si curva e/o ci si sposta in direzione obliqua su tratti in pendenza o in salita/discesa;</span>
<span id="t120" class="t" style="left:1937px;top:600.51px;font-size:26.80px;line-height:26.80px;color:#000;-webkit-text-stroke:0.3px #000;letter-spacing:0.000px">- si trasportano carichi oscillanti o con il baricentro sensibilmente spostato rispetto al piano mediano longitudinale del carrello;</span>
<span id="t121" class="t" style="left:1937px;top:633.04px;font-size:26.77px;line-height:26.77px;color:#000;-webkit-text-stroke:0.3px #000;letter-spacing:0.000px">- si percorrono le salite/discese con il carico rivolto a valle;</span>
<span id="t122" class="t" style="left:1937px;top:665.68px;font-size:26.60px;line-height:26.60px;color:#000;-webkit-text-stroke:0.3px #000;letter-spacing:0.000px">- si inclina in avanti il gruppo di sollevamento con il carico sollevato;</span>
<span id="t123" class="t" style="left:1937px;top:697.89px;font-size:26.95px;line-height:26.95px;color:#000;-webkit-text-stroke:0.3px #000;letter-spacing:0.000px">- si percorrono pavimenti irregolari (superfici disuniformi o in pendenza o terreno morbido);</span>
<span id="t124" class="t" style="left:1937px;top:730.68px;font-size:26.60px;line-height:26.60px;color:#000;-webkit-text-stroke:0.3px #000;letter-spacing:-0.046px">- si sovraccarica il carrello;</span>
<span id="t125" class="t" style="left:1937px;top:762.49px;font-size:27.42px;line-height:27.42px;color:#000;-webkit-text-stroke:0.3px #000;letter-spacing:0.000px">- si urta con strutture fisse e/o mobili;</span>
<span id="t126" class="t" style="left:1937px;top:795.40px;font-size:26.94px;line-height:26.94px;color:#000;-webkit-text-stroke:0.3px #000;letter-spacing:0.000px">- si valuta in modo errato il baricentro del carico.</span>
<span id="t127" class="t" style="left:1935px;top:860.67px;font-size:26.62px;line-height:26.62px;color:#000;-webkit-text-stroke:0.3px #000;letter-spacing:0.000px">Alcuni di questi pericoli si accentuano se il carrello elevatore è scarico.</span>
<span id="t128" class="t" style="left:1935px;top:892.89px;font-size:26.95px;line-height:26.95px;color:#000;-webkit-text-stroke:0.3px #000;letter-spacing:0.000px">Le circostanze sopra elencate, qualificabili come uso non corretto, possono essere ulteriormente aggravate se il carrello non</span>
<span id="t129" class="t" style="left:1935px;top:925.06px;font-size:27.33px;line-height:27.33px;color:#000;-webkit-text-stroke:0.3px #000;letter-spacing:0.000px">è mantenuto in buono stato di conservazione ed efficienza o se vengono addirittura apportate modifiche costruttive che</span>
<span id="t130" class="t" style="left:1935px;top:958.02px;font-size:26.79px;line-height:26.79px;color:#000;-webkit-text-stroke:0.3px #000;letter-spacing:0.000px">alterano la distribuzione delle masse (ad esempio modifica della zavorra, installazione su carrelli elettrici di batterie di trazione</span>
<span id="t131" class="t" style="left:1935px;top:990.02px;font-size:27.39px;line-height:27.39px;color:#000;-webkit-text-stroke:0.3px #000;letter-spacing:0.000px">diverse da quelle previste dal costruttore, installazione ed uso di attrezzature inadeguate e non previste dal costruttore del</span>
<span id="t132" class="t" style="left:1935px;top:1022.75px;font-size:27.11px;line-height:27.11px;color:#000;-webkit-text-stroke:0.3px #000;letter-spacing:0.000px">carrello, installazione di gommatura non prevista, ecc.).</span>
<span id="t133" class="t" style="left:1939px;top:1861.07px;font-size:29.45px;line-height:29.45px;color:#111;font-weight:700;font-family:'DejaVu Sans','Liberation Sans',sans-serif;letter-spacing:-0.597px">Comments</span>
<span id="t134" class="t" style="left:2127.5px;top:1859.76px;font-size:31.00px;line-height:31.00px;color:#111;font-weight:700;font-family:'DejaVu Sans','Liberation Sans',sans-serif;">|</span>
<span id="t135" class="t" style="left:2152px;top:1861.07px;font-size:29.45px;line-height:29.45px;color:#111;font-weight:700;font-family:'DejaVu Sans','Liberation Sans',sans-serif;letter-spacing:-0.717px">Other</span>
<div style="left:1935px;top:1901px;width:1501px;height:2px;background:#ececec;"></div>
<span id="t136" class="t" style="left:1942px;top:1911.68px;font-size:27.55px;line-height:27.55px;color:#222;letter-spacing:-0.349px">Rules:</span>
<div style="left:2023px;top:1953px;width:1413px;height:7px;background:#f0f0f0;"></div>
<div style="left:0px;top:1978px;width:3455px;height:59px;background:#f5f6f7;"></div>
<svg style="left:3px;top:1991.5px" width="39" height="39" viewBox="0 0 39 39"><circle cx="19.5" cy="19.5" r="19.5" fill="#3b78b4"/><rect x="16.6" y="16" width="5.8" height="15.5" fill="#fff"/><circle cx="19.5" cy="9.5" r="3.4" fill="#fff"/></svg>
<span id="t137" class="t" style="left:51px;top:1994.76px;font-size:30.41px;line-height:30.41px;color:#000;letter-spacing:0.000px">Automatic saving for 1 document windows</span>
<div style="left:2627px;top:1986px;width:2px;height:51px;background:#b9b9b9;"></div>
<div style="left:2894px;top:1986px;width:2px;height:51px;background:#b9b9b9;"></div>
<div style="left:3194px;top:1986px;width:2px;height:51px;background:#b9b9b9;"></div>
<div style="left:3344.6px;top:1986px;width:2px;height:51px;background:#b9b9b9;"></div>
<svg style="left:2631px;top:1990.8px" width="33" height="39.5" viewBox="0 0 33 39.5"><defs><linearGradient id="rg3" x1="0" y1="0" x2="0" y2="1"><stop offset="0" stop-color="#ea7440"/><stop offset="1" stop-color="#c9320f"/></linearGradient></defs>
<path d="M6 26L3.5 37L9.5 34.5L13 39.5L17 29ZM27 26L29.5 37L23.5 34.5L20 39.5L16 29Z" fill="#c9320f"/>
<polygon fill="url(#rg3)" points="16.5,0.1 19.3,2.6 22.8,1.3 24.4,4.7 28.1,4.9 28.3,8.6 31.7,10.2 30.4,13.7 32.9,16.5 30.4,19.3 31.7,22.8 28.3,24.4 28.1,28.1 24.4,28.3 22.8,31.7 19.3,30.4 16.5,32.9 13.7,30.4 10.2,31.7 8.6,28.3 4.9,28.1 4.7,24.4 1.3,22.8 2.6,19.3 0.1,16.5 2.6,13.7 1.3,10.2 4.7,8.6 4.9,4.9 8.6,4.7 10.2,1.3 13.7,2.6"/>
<circle cx="16.5" cy="16.5" r="9.6" fill="none" stroke="#f4ad90" stroke-width="1.7"/></svg>
<span id="t138" class="t" style="left:2677.4px;top:1996.67px;font-size:28.97px;line-height:28.97px;color:#000;letter-spacing:-0.237px">Dir. 2006/42/EC</span>
<svg style="left:2903px;top:1993px" width="35" height="38" viewBox="0 0 35 38"><circle cx="17.5" cy="10" r="9.6" fill="#9c2226"/><path d="M1 32C1 24.5 6 21.5 10.5 21L17.5 27.5L24.5 21C29 21.5 34 24.5 34 32C34 39.5 1 39.5 1 32Z" fill="#9c2226"/></svg>
<span id="t139" class="t" style="left:2950px;top:1997.78px;font-size:30.50px;line-height:30.50px;color:#000;letter-spacing:0.137px">Amministratore</span>
<svg style="left:3170.5px;top:2008.5px" width="13.5" height="7.5" viewBox="0 0 13.5 7.5"><path d="M0 0H13.5L6.75 7.5Z" fill="#000"/></svg>
<svg style="left:3196px;top:1990px" width="40" height="42" viewBox="0 0 40 42"><g fill="none" stroke="#3b78b4" stroke-width="4.6" transform="rotate(-45 20 21)"><rect x="0" y="14" width="23" height="14" rx="7"/><rect x="17" y="14" width="23" height="14" rx="7"/></g></svg>
<span id="t140" class="t" style="left:3245.4px;top:1994.90px;font-size:30.48px;line-height:30.48px;color:#000;letter-spacing:0.000px">cemfu</span>
<svg style="left:3353.4px;top:1993.7px" width="35" height="35" viewBox="0 0 35 35"><circle cx="17.5" cy="17.5" r="17.5" fill="#3b78b4"/><text x="17.5" y="23.5" font-size="17" font-family="Liberation Sans,sans-serif" text-anchor="middle" fill="#cfe0f2">EN</text></svg>
<svg style="left:3396.5px;top:2008.5px" width="13.5" height="7.5" viewBox="0 0 13.5 7.5"><path d="M0 0H13.5L6.75 7.5Z" fill="#000"/></svg>
<div style="left:3451px;top:126px;width:3px;height:115px;background:linear-gradient(to right,#f5f6f7,#9a9a9a);"></div>
<div style="left:3451px;top:1978px;width:3px;height:59px;background:linear-gradient(to right,#f5f6f7,#9a9a9a);"></div>
<div style="left:3452.8px;top:240.5px;width:1px;height:1737.5px;background:#63718d;"></div>
<div style="left:3453.8px;top:58px;width:1.2px;height:1979px;background:#0a0a0a;"></div>
<div style="left:0px;top:241px;width:1.2px;height:1737px;background:#55617a;"></div>
</body></html>
